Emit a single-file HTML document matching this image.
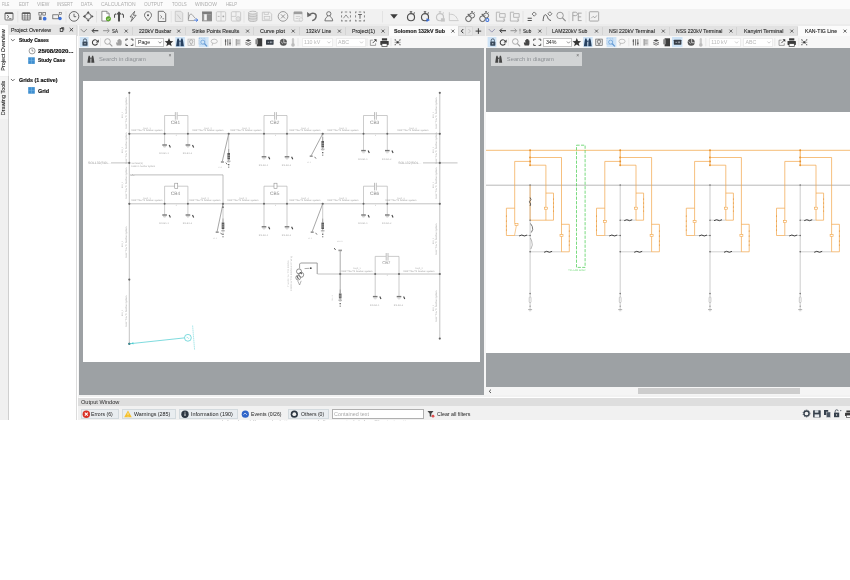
<!DOCTYPE html>
<html><head><meta charset="utf-8"><title>Power system app</title>
<style>
html,body{margin:0;padding:0;}
body{width:850px;height:580px;position:relative;overflow:hidden;background:#fff;font-family:"Liberation Sans",sans-serif;}
span{letter-spacing:0;}
svg{position:absolute;left:0;top:0;}
svg text{text-rendering:geometricPrecision;}
#root{position:absolute;left:0;top:0;width:850px;height:580px;overflow:hidden;filter:blur(0.45px);}
</style></head><body><div id="root">

<div style="position:absolute;left:0px;top:0px;width:850px;height:9px;background:#fbfbfb;"></div>
<div style="position:absolute;left:0px;top:9px;width:850px;height:16px;background:#f1f1f1;"></div>
<div style="position:absolute;left:0px;top:24px;width:850px;height:2.4px;background:#ececec;"></div>
<div style="position:absolute;left:0px;top:26.4px;width:850px;height:9.3px;background:#e2e2e2;"></div>
<div style="position:absolute;left:78px;top:35.7px;width:772px;height:12.1px;background:#f7f7f7;"></div>
<div style="position:absolute;left:0px;top:25px;width:8px;height:395.2px;background:#f0f0f0;"></div>
<div style="position:absolute;left:0px;top:76.5px;width:8px;height:42.5px;background:#f5f5f5;"></div>
<div style="position:absolute;left:7.8px;top:25px;width:1.2px;height:395.2px;background:#cfcfcf;"></div>
<div style="position:absolute;left:0px;top:24.5px;width:8.4px;height:51.8px;background:#ffffff;"></div>
<div style="position:absolute;left:7.9px;top:24.5px;width:0.6px;height:51.8px;background:#e6e6e6;"></div>
<div style="position:absolute;left:9px;top:25.2px;width:67.2px;height:9.6px;background:#e5e5e5;"></div>
<div style="position:absolute;left:9px;top:34.8px;width:67.2px;height:385.4px;background:#ffffff;"></div>
<div style="position:absolute;left:76.1px;top:25px;width:1.4px;height:395.2px;background:#dcdcdc;"></div>
<div style="position:absolute;left:77.5px;top:25px;width:1.5px;height:395.2px;background:#f6f6f6;"></div>
<div style="position:absolute;left:79px;top:47.8px;width:405px;height:348.2px;background:#9da1a4;"></div>
<div style="position:absolute;left:484.2px;top:47.8px;width:2px;height:349.2px;background:#f6f6f6;"></div>
<div style="position:absolute;left:486px;top:47.8px;width:364px;height:339.2px;background:#9da1a4;"></div>
<div style="position:absolute;left:83px;top:81px;width:397px;height:281px;background:#ffffff;"></div>
<div style="position:absolute;left:486px;top:112px;width:364px;height:241px;background:#ffffff;"></div>
<div style="position:absolute;left:486px;top:387px;width:364px;height:8.4px;background:#f5f5f5;"></div>
<div style="position:absolute;left:638px;top:387.6px;width:161.5px;height:6.8px;background:#cdcdcd;"></div>
<div style="position:absolute;left:78px;top:395px;width:772px;height:2px;background:#f2f2f2;"></div>
<div style="position:absolute;left:78px;top:397.5px;width:772px;height:8.8px;background:#dedede;"></div>
<div style="position:absolute;left:78px;top:406px;width:772px;height:14.2px;background:#f1f1f1;"></div>
<div style="position:absolute;left:484.8px;top:24px;width:1.1px;height:12px;background:#f2f2f2;"></div>
<span style="position:absolute;left:2.3px;top:0.68px;font-size:5.2px;line-height:6.24px;color:#adadad;font-weight:normal;white-space:nowrap;display:inline-block;transform-origin:0 50%;transform:scaleX(0.674);">FILE</span>
<span style="position:absolute;left:18.7px;top:0.68px;font-size:5.2px;line-height:6.24px;color:#adadad;font-weight:normal;white-space:nowrap;display:inline-block;transform-origin:0 50%;transform:scaleX(0.844);">EDIT</span>
<span style="position:absolute;left:36.7px;top:0.68px;font-size:5.2px;line-height:6.24px;color:#adadad;font-weight:normal;white-space:nowrap;display:inline-block;transform-origin:0 50%;transform:scaleX(0.941);">VIEW</span>
<span style="position:absolute;left:56.9px;top:0.68px;font-size:5.2px;line-height:6.24px;color:#adadad;font-weight:normal;white-space:nowrap;display:inline-block;transform-origin:0 50%;transform:scaleX(0.833);">INSERT</span>
<span style="position:absolute;left:81px;top:0.68px;font-size:5.2px;line-height:6.24px;color:#adadad;font-weight:normal;white-space:nowrap;display:inline-block;transform-origin:0 50%;transform:scaleX(0.878);">DATA</span>
<span style="position:absolute;left:101.2px;top:0.68px;font-size:5.2px;line-height:6.24px;color:#adadad;font-weight:normal;white-space:nowrap;display:inline-block;transform-origin:0 50%;transform:scaleX(0.963);">CALCULATION</span>
<span style="position:absolute;left:144.4px;top:0.68px;font-size:5.2px;line-height:6.24px;color:#adadad;font-weight:normal;white-space:nowrap;display:inline-block;transform-origin:0 50%;transform:scaleX(0.898);">OUTPUT</span>
<span style="position:absolute;left:172.3px;top:0.68px;font-size:5.2px;line-height:6.24px;color:#adadad;font-weight:normal;white-space:nowrap;display:inline-block;transform-origin:0 50%;transform:scaleX(0.844);">TOOLS</span>
<span style="position:absolute;left:195.2px;top:0.68px;font-size:5.2px;line-height:6.24px;color:#adadad;font-weight:normal;white-space:nowrap;display:inline-block;transform-origin:0 50%;transform:scaleX(0.960);">WINDOW</span>
<span style="position:absolute;left:226px;top:0.68px;font-size:5.2px;line-height:6.24px;color:#adadad;font-weight:normal;white-space:nowrap;display:inline-block;transform-origin:0 50%;transform:scaleX(0.824);">HELP</span>
<div style="position:absolute;left:132.3px;top:27px;width:0.8px;height:8px;background:#d4d4d4;"></div>
<span style="position:absolute;left:112.2px;top:27.67px;font-size:5.7px;line-height:6.84px;color:#2e2e2e;font-weight:normal;white-space:nowrap;-webkit-text-stroke:0.12px #2a2a2a;display:inline-block;transform-origin:0 50%;transform:scaleX(0.776);">SA</span>
<div style="position:absolute;left:185px;top:27px;width:0.8px;height:8px;background:#d4d4d4;"></div>
<span style="position:absolute;left:138.6px;top:27.67px;font-size:5.7px;line-height:6.84px;color:#2e2e2e;font-weight:normal;white-space:nowrap;-webkit-text-stroke:0.12px #2a2a2a;display:inline-block;transform-origin:0 50%;transform:scaleX(0.905);">220kV Busbar</span>
<div style="position:absolute;left:252.9px;top:27px;width:0.8px;height:8px;background:#d4d4d4;"></div>
<span style="position:absolute;left:191.6px;top:27.67px;font-size:5.7px;line-height:6.84px;color:#2e2e2e;font-weight:normal;white-space:nowrap;-webkit-text-stroke:0.12px #2a2a2a;display:inline-block;transform-origin:0 50%;transform:scaleX(0.901);">Strike Points Results</span>
<div style="position:absolute;left:298.6px;top:27px;width:0.8px;height:8px;background:#d4d4d4;"></div>
<span style="position:absolute;left:260px;top:27.67px;font-size:5.7px;line-height:6.84px;color:#2e2e2e;font-weight:normal;white-space:nowrap;-webkit-text-stroke:0.12px #2a2a2a;display:inline-block;transform-origin:0 50%;transform:scaleX(0.962);">Curve plot</span>
<div style="position:absolute;left:344.9px;top:27px;width:0.8px;height:8px;background:#d4d4d4;"></div>
<span style="position:absolute;left:305.6px;top:27.67px;font-size:5.7px;line-height:6.84px;color:#2e2e2e;font-weight:normal;white-space:nowrap;-webkit-text-stroke:0.12px #2a2a2a;display:inline-block;transform-origin:0 50%;transform:scaleX(0.887);">132kV Line</span>
<div style="position:absolute;left:388px;top:27px;width:0.8px;height:8px;background:#d4d4d4;"></div>
<span style="position:absolute;left:352px;top:27.67px;font-size:5.7px;line-height:6.84px;color:#2e2e2e;font-weight:normal;white-space:nowrap;-webkit-text-stroke:0.12px #2a2a2a;display:inline-block;transform-origin:0 50%;transform:scaleX(0.935);">Project(1)</span>
<div style="position:absolute;left:388.7px;top:25.6px;width:69.10000000000002px;height:10px;background:#fbfbfb;"></div>
<span style="position:absolute;left:394.4px;top:27.67px;font-size:5.7px;line-height:6.84px;color:#111;font-weight:bold;white-space:nowrap;-webkit-text-stroke:0.12px #2a2a2a;display:inline-block;transform-origin:0 50%;transform:scaleX(0.933);">Solomon 132kV Sub</span>
<div style="position:absolute;left:545.5px;top:27px;width:0.8px;height:8px;background:#d4d4d4;"></div>
<span style="position:absolute;left:522.5px;top:27.67px;font-size:5.7px;line-height:6.84px;color:#2e2e2e;font-weight:normal;white-space:nowrap;-webkit-text-stroke:0.12px #2a2a2a;display:inline-block;transform-origin:0 50%;transform:scaleX(0.818);">Sub</span>
<div style="position:absolute;left:601.5px;top:27px;width:0.8px;height:8px;background:#d4d4d4;"></div>
<span style="position:absolute;left:552.4px;top:27.67px;font-size:5.7px;line-height:6.84px;color:#2e2e2e;font-weight:normal;white-space:nowrap;-webkit-text-stroke:0.12px #2a2a2a;display:inline-block;transform-origin:0 50%;transform:scaleX(0.894);">LAM220kV Sub</span>
<div style="position:absolute;left:668.7px;top:27px;width:0.8px;height:8px;background:#d4d4d4;"></div>
<span style="position:absolute;left:608.9px;top:27.67px;font-size:5.7px;line-height:6.84px;color:#2e2e2e;font-weight:normal;white-space:nowrap;-webkit-text-stroke:0.12px #2a2a2a;display:inline-block;transform-origin:0 50%;transform:scaleX(0.913);">NSI 220kV Terminal</span>
<div style="position:absolute;left:736.2px;top:27px;width:0.8px;height:8px;background:#d4d4d4;"></div>
<span style="position:absolute;left:675.7px;top:27.67px;font-size:5.7px;line-height:6.84px;color:#2e2e2e;font-weight:normal;white-space:nowrap;-webkit-text-stroke:0.12px #2a2a2a;display:inline-block;transform-origin:0 50%;transform:scaleX(0.886);">NSS 220kV Terminal</span>
<div style="position:absolute;left:797px;top:27px;width:0.8px;height:8px;background:#d4d4d4;"></div>
<span style="position:absolute;left:743.6px;top:27.67px;font-size:5.7px;line-height:6.84px;color:#2e2e2e;font-weight:normal;white-space:nowrap;-webkit-text-stroke:0.12px #2a2a2a;display:inline-block;transform-origin:0 50%;transform:scaleX(0.933);">Kanyirri Terminal</span>
<div style="position:absolute;left:797.6px;top:25.6px;width:52.39999999999998px;height:10px;background:#fbfbfb;"></div>
<span style="position:absolute;left:804.7px;top:27.67px;font-size:5.7px;line-height:6.84px;color:#111;font-weight:normal;white-space:nowrap;-webkit-text-stroke:0.12px #2a2a2a;display:inline-block;transform-origin:0 50%;transform:scaleX(0.905);">KAN-TIG Line</span>
<span style="position:absolute;left:11px;top:26.60px;font-size:5.8px;line-height:6.96px;color:#2a2a2a;font-weight:normal;white-space:nowrap;-webkit-text-stroke:0.12px #2a2a2a;display:inline-block;transform-origin:0 50%;transform:scaleX(0.913);">Project Overview</span>
<span style="position:absolute;left:19.3px;top:37.43px;font-size:5.6px;line-height:6.72px;color:#111;font-weight:bold;white-space:nowrap;-webkit-text-stroke:0.18px #111;display:inline-block;transform-origin:0 50%;transform:scaleX(0.887);">Study Cases</span>
<span style="position:absolute;left:38.3px;top:47.83px;font-size:5.6px;line-height:6.72px;color:#111;font-weight:bold;white-space:nowrap;-webkit-text-stroke:0.18px #111;display:inline-block;transform-origin:0 50%;transform:scaleX(1.089);">25/08/2020...</span>
<span style="position:absolute;left:38.3px;top:57.43px;font-size:5.6px;line-height:6.72px;color:#111;font-weight:bold;white-space:nowrap;-webkit-text-stroke:0.18px #111;display:inline-block;transform-origin:0 50%;transform:scaleX(0.892);">Study Case</span>
<span style="position:absolute;left:19.3px;top:77.43px;font-size:5.6px;line-height:6.72px;color:#111;font-weight:bold;white-space:nowrap;-webkit-text-stroke:0.18px #111;display:inline-block;transform-origin:0 50%;transform:scaleX(0.952);">Grids (1 active)</span>
<span style="position:absolute;left:38.3px;top:87.63px;font-size:5.6px;line-height:6.72px;color:#111;font-weight:bold;white-space:nowrap;-webkit-text-stroke:0.18px #111;display:inline-block;transform-origin:0 50%;transform:scaleX(0.973);">Grid</span>
<span style="position:absolute;left:3.1px;top:50px;font-size:5.5px;line-height:6px;color:#333;-webkit-text-stroke:0.12px #333;white-space:nowrap;transform:translate(-50%,-50%) rotate(-90deg);">Project Overview</span>
<span style="position:absolute;left:3.1px;top:98px;font-size:5.5px;line-height:6px;color:#333;-webkit-text-stroke:0.12px #333;white-space:nowrap;transform:translate(-50%,-50%) rotate(-90deg);">Drawing Tools</span>
<div style="position:absolute;left:82.9px;top:52.2px;width:91.2px;height:13.9px;background:#d2d4d5;"></div>
<span style="position:absolute;left:98.9px;top:55.80px;font-size:5.8px;line-height:6.96px;color:#8c9094;font-weight:normal;white-space:nowrap;">Search in diagram</span>
<span style="position:absolute;left:168.4px;top:51.90px;font-size:5px;line-height:6.00px;color:#666;font-weight:normal;white-space:nowrap;">&#215;</span>
<div style="position:absolute;left:490.8px;top:52.2px;width:91.2px;height:13.9px;background:#d2d4d5;"></div>
<span style="position:absolute;left:506.8px;top:55.80px;font-size:5.8px;line-height:6.96px;color:#8c9094;font-weight:normal;white-space:nowrap;">Search in diagram</span>
<span style="position:absolute;left:576.3px;top:51.90px;font-size:5px;line-height:6.00px;color:#666;font-weight:normal;white-space:nowrap;">&#215;</span>
<div style="position:absolute;left:135.3px;top:37.8px;width:28.5px;height:8.9px;background:#ffffff;box-sizing:border-box;border:0.5px solid #c4c4c4;"></div>
<span style="position:absolute;left:137.9px;top:39.31px;font-size:5.3px;line-height:6.36px;color:#222;font-weight:normal;white-space:nowrap;">Page</span>
<div style="position:absolute;left:301.5px;top:37.8px;width:31.5px;height:8.9px;background:#ffffff;box-sizing:border-box;border:0.5px solid #ececec;"></div>
<span style="position:absolute;left:304.1px;top:39.31px;font-size:5.3px;line-height:6.36px;color:#b8b8b8;font-weight:normal;white-space:nowrap;">110 kV</span>
<div style="position:absolute;left:335.5px;top:37.8px;width:30px;height:8.9px;background:#ffffff;box-sizing:border-box;border:0.5px solid #ececec;"></div>
<span style="position:absolute;left:338.1px;top:39.31px;font-size:5.3px;line-height:6.36px;color:#b8b8b8;font-weight:normal;white-space:nowrap;">ABC</span>
<div style="position:absolute;left:543.3px;top:37.8px;width:29px;height:8.9px;background:#ffffff;box-sizing:border-box;border:0.5px solid #c4c4c4;"></div>
<span style="position:absolute;left:545.9px;top:39.31px;font-size:5.3px;line-height:6.36px;color:#222;font-weight:normal;white-space:nowrap;">34%</span>
<div style="position:absolute;left:708.6px;top:37.8px;width:32px;height:8.9px;background:#ffffff;box-sizing:border-box;border:0.5px solid #ececec;"></div>
<span style="position:absolute;left:711.2px;top:39.31px;font-size:5.3px;line-height:6.36px;color:#b8b8b8;font-weight:normal;white-space:nowrap;">110 kV</span>
<div style="position:absolute;left:742.8px;top:37.8px;width:30.4px;height:8.9px;background:#ffffff;box-sizing:border-box;border:0.5px solid #ececec;"></div>
<span style="position:absolute;left:745.4px;top:39.31px;font-size:5.3px;line-height:6.36px;color:#b8b8b8;font-weight:normal;white-space:nowrap;">ABC</span>
<span style="position:absolute;left:81.3px;top:398.79px;font-size:5.5px;line-height:6.60px;color:#2a2a2a;font-weight:normal;white-space:nowrap;display:inline-block;transform-origin:0 50%;transform:scaleX(1.019);">Output Window</span>
<div style="position:absolute;left:80.6px;top:408.8px;width:38px;height:10px;background:#e9edf0;box-sizing:border-box;border:0.5px solid #d3dade;"></div>
<span style="position:absolute;left:91.4px;top:410.95px;font-size:5.4px;line-height:6.48px;color:#222;font-weight:normal;white-space:nowrap;display:inline-block;transform-origin:0 50%;transform:scaleX(0.956);">Errors (6)</span>
<div style="position:absolute;left:122px;top:408.8px;width:54px;height:10px;background:#e9edf0;box-sizing:border-box;border:0.5px solid #d3dade;"></div>
<span style="position:absolute;left:134px;top:410.95px;font-size:5.4px;line-height:6.48px;color:#222;font-weight:normal;white-space:nowrap;display:inline-block;transform-origin:0 50%;transform:scaleX(0.989);">Warnings (285)</span>
<div style="position:absolute;left:179px;top:408.8px;width:59px;height:10px;background:#e9edf0;box-sizing:border-box;border:0.5px solid #d3dade;"></div>
<span style="position:absolute;left:191px;top:410.95px;font-size:5.4px;line-height:6.48px;color:#222;font-weight:normal;white-space:nowrap;display:inline-block;transform-origin:0 50%;transform:scaleX(1.021);">Information (190)</span>
<span style="position:absolute;left:251.3px;top:410.95px;font-size:5.4px;line-height:6.48px;color:#222;font-weight:normal;white-space:nowrap;display:inline-block;transform-origin:0 50%;transform:scaleX(0.950);">Events (0/26)</span>
<div style="position:absolute;left:288px;top:408.8px;width:40.5px;height:10px;background:#e9edf0;box-sizing:border-box;border:0.5px solid #d3dade;"></div>
<span style="position:absolute;left:300.5px;top:410.95px;font-size:5.4px;line-height:6.48px;color:#222;font-weight:normal;white-space:nowrap;display:inline-block;transform-origin:0 50%;transform:scaleX(0.955);">Others (0)</span>
<div style="position:absolute;left:331.7px;top:409px;width:92.2px;height:9.6px;background:#ffffff;box-sizing:border-box;border:0.6px solid #b0b0b0;"></div>
<span style="position:absolute;left:334px;top:410.98px;font-size:5.2px;line-height:6.24px;color:#a8a8a8;font-weight:normal;white-space:nowrap;display:inline-block;transform-origin:0 50%;transform:scaleX(1.044);">Contained text</span>
<span style="position:absolute;left:437px;top:410.85px;font-size:5.4px;line-height:6.48px;color:#222;font-weight:normal;white-space:nowrap;display:inline-block;transform-origin:0 50%;transform:scaleX(0.979);">Clear all filters</span>
<div style="position:absolute;left:222px;top:419.6px;width:205px;height:1.6px;overflow:hidden;opacity:0.35;"><span style="position:absolute;left:0;top:-0.6px;font-size:5.4px;line-height:6px;color:#333;white-space:nowrap;letter-spacing:0.3px;">Info - Load flow calculation successfully executed. Info - Short circuit</span></div>
<svg width="850" height="580" viewBox="0 0 850 580" font-family="Liberation Sans, sans-serif">
<g transform="translate(9,16.4) scale(0.93)"><g transform="scale(0.86)"><rect x="-5" y="-4.5" width="10" height="9" rx="1" fill="none" stroke="#505050" stroke-width="1"/><path d="M-5,-3.9 H5" stroke="#505050" stroke-width="1.6"/><path d="M-2.5,-1.6 L0,0.4 L-2.5,2.4 M0.3,2.8 H3" fill="none" stroke="#505050" stroke-width="1"/></g></g>
<g transform="translate(26.2,16.4) scale(0.93)"><g transform="scale(0.86)"><rect x="-5" y="-4.5" width="10" height="9" rx="0.8" fill="none" stroke="#505050" stroke-width="1"/><path d="M-5,-3.9 H5" stroke="#505050" stroke-width="1.5"/><path d="M-5,-0.6 H5 M-5,2 H5 M-1.7,-4.5 V4.5 M1.7,-4.5 V4.5" stroke="#505050" stroke-width="0.7" fill="none"/></g></g>
<g transform="translate(42.5,16.4) scale(0.93)"><g transform="scale(0.86)"><rect x="-4.5" y="-5" width="3.4" height="3.4" fill="none" stroke="#505050" stroke-width="0.8"/><rect x="0.4" y="-5" width="3.4" height="3.4" fill="none" stroke="#505050" stroke-width="0.8"/><rect x="-4.5" y="0" width="3.4" height="4.5" fill="#505050" opacity="0.75"/><circle cx="2.7" cy="2.8" r="2.3" fill="#3b6fd8"/></g></g>
<g transform="translate(57.2,16.4) scale(0.93)"><g transform="scale(0.86)"><rect x="-5.5" y="-2" width="7" height="5" fill="none" stroke="#505050" stroke-width="0.9"/><rect x="2.5" y="-5" width="2.6" height="2.6" fill="none" stroke="#505050" stroke-width="0.7"/><circle cx="3.5" cy="2.6" r="2.2" fill="#3b6fd8"/></g></g>
<g transform="translate(74,16.4) scale(0.93)"><circle r="5.2" fill="none" stroke="#505050" stroke-width="0.9"/><path d="M0,-2.8600000000000003 V0.3 H2.3400000000000003" fill="none" stroke="#505050" stroke-width="0.9"/></g>
<g transform="translate(88.2,16.4) scale(0.93)"><circle r="3.1" fill="none" stroke="#505050" stroke-width="0.9"/><path d="M0,-5.8 L-1.7,-3.5 H1.7 Z M0,5.8 L-1.7,3.5 H1.7 Z M-5.8,0 L-3.5,-1.7 V1.7 Z M5.8,0 L3.5,-1.7 V1.7 Z" fill="#505050"/></g>
<g transform="translate(105.6,16.4) scale(0.93)"><path d="M-4,-5.5 H1.3 L3.8,-3 V5 H-4 Z" fill="#fcfcfc" stroke="#6a6a6a" stroke-width="0.8"/><path d="M1.3,-5.5 V-3 H3.8" fill="none" stroke="#6a6a6a" stroke-width="0.6"/><circle cx="3" cy="2.6" r="2.7" fill="#5aa52c"/><path d="M1.8,2.7 L2.7,3.6 L4.3,1.6" fill="none" stroke="#eaf6df" stroke-width="0.8"/></g>
<g transform="translate(119,16.4) scale(0.93)"><path d="M0,-5.5 L3,-2 H1.1 V5.5 H-1.1 V-2 H-3 Z" fill="#505050"/><path d="M-4.8,1.5 V-1.5 L-3.2,-3 M4.8,1.5 V-1.5 L3.2,-3" stroke="#505050" stroke-width="1.1" fill="none"/></g>
<g transform="translate(133,16.4) scale(0.93)"><path d="M1.8,-5.5 L-3.2,0.6 H-0.3 L-2.2,5.5 L3.4,-1.2 H0.5 Z" fill="none" stroke="#505050" stroke-width="0.8"/></g>
<g transform="translate(148,16.4) scale(0.93)"><g transform="scale(0.9)"><path d="M0,5.5 L-2.6,1.8 A4.2,4.2 0 1 1 2.6,1.8 Z" fill="none" stroke="#505050" stroke-width="0.9"/><circle cy="-1.5" r="1.2" fill="#505050"/></g></g>
<g transform="translate(162,16.4) scale(0.93)"><path d="M-4,-5.5 H1.5 L4,-3 V5.5 H-4 Z" fill="none" stroke="#5a5a5a" stroke-width="0.9"/><path d="M-1.8,-1 L0,0.5 L-1.8,2 M0.5,2.5 H2.3" fill="none" stroke="#5a5a5a" stroke-width="0.7"/></g>
<g transform="translate(179,16.4) scale(0.93)"><path d="M-4,-5.5 H2 L4,-3.5 V5.5 H-4 Z" fill="#e6e6e6" stroke="#c4c4c4" stroke-width="0.9"/><path d="M-2,-2 L2,3" stroke="#c4c4c4" stroke-width="1"/></g>
<g transform="translate(193,16.4) scale(0.93)"><path d="M-5,-4.5 V4.5 H1" fill="none" stroke="#8a8a8a" stroke-width="0.8"/><path d="M-5,3 C-3,-6 -1,-2 1,0.5 L3,2.5" fill="none" stroke="#8a8a8a" stroke-width="0.8"/><path d="M1,4 H5 M3.4,2.4 L5.2,4 L3.4,5.6" stroke="#3b6fd8" stroke-width="1" fill="none"/></g>
<g transform="translate(207,16.4) scale(0.93)"><rect x="-4.8" y="-4.8" width="9.6" height="9.6" fill="#f4f4f4" stroke="#7d7d7d" stroke-width="0.9"/><rect x="-4.8" y="-4.8" width="9.6" height="2.4" fill="#7d7d7d"/><rect x="-0.2" y="-2.4" width="5" height="7.2" fill="#8a8a8a"/><rect x="-4.8" y="-2.4" width="1.8" height="7.2" fill="#9a9a9a"/></g>
<g transform="translate(221,16.4) scale(0.93)"><rect x="-5" y="-5" width="10" height="10" rx="1" fill="none" stroke="#c4c4c4" stroke-width="0.9"/><path d="M0,-5 V5" stroke="#c4c4c4" stroke-width="0.8"/><path d="M-3.5,0 H-1.5 M1.5,0 H3.5 M2.5,-1 V1" stroke="#8a8a8a" stroke-width="0.6"/></g>
<g transform="translate(236,16.4) scale(0.93)"><rect x="-5" y="-5" width="10" height="10" rx="1" fill="none" stroke="#c4c4c4" stroke-width="0.9"/><path d="M0,-5 V0 H-5" stroke="#c4c4c4" stroke-width="0.8" fill="none"/><circle cx="2.3" cy="2.5" r="2.3" fill="#e0e0e0" stroke="#c4c4c4" stroke-width="0.8"/></g>
<g transform="translate(252.8,16.4) scale(0.93)"><path d="M-4.5,-4 V4 C-4.5,6 4.5,6 4.5,4 V-4" fill="#dcdcdc" stroke="#b4b4b4" stroke-width="0.9"/><ellipse cy="-4" rx="4.5" ry="1.6" fill="#eee" stroke="#b4b4b4" stroke-width="0.9"/><path d="M-4.5,-1.2 C-4.5,0.6 4.5,0.6 4.5,-1.2 M-4.5,1.5 C-4.5,3.3 4.5,3.3 4.5,1.5" fill="none" stroke="#b4b4b4" stroke-width="0.8"/></g>
<g transform="translate(267,16.4) scale(0.93)"><path d="M-5,-4.5 H3 L5,-2.5 V4.5 H-5 Z" fill="none" stroke="#c4c4c4" stroke-width="0.9"/><rect x="-3" y="0" width="6" height="3" fill="none" stroke="#c4c4c4" stroke-width="0.8"/><path d="M-3,-4.5 V-2 H1.5 V-4.5" fill="none" stroke="#c4c4c4" stroke-width="0.8"/></g>
<g transform="translate(283,16.4) scale(0.93)"><circle r="5.2" fill="none" stroke="#8a8a8a" stroke-width="0.9"/><path d="M-2.2,-2.2 L2.2,2.2 M2.2,-2.2 L-2.2,2.2" stroke="#8a8a8a" stroke-width="0.9"/></g>
<g transform="translate(298,16.4) scale(0.93)"><rect x="-4.5" y="-5" width="9" height="10" rx="0.8" fill="none" stroke="#c4c4c4" stroke-width="0.9"/><rect x="-4.5" y="-5" width="9" height="2.6" fill="#8a8a8a" opacity="0.8"/><path d="M-2.5,0 H2.5 M-2.5,2.2 H0.5" stroke="#c4c4c4" stroke-width="0.8"/><circle cx="3.2" cy="3.3" r="1.9" fill="#eee" stroke="#c4c4c4" stroke-width="0.7"/></g>
<g transform="translate(312,16.4) scale(0.93)"><path d="M-2.6,-1.6 C0,-4.6 5.2,-3.6 4.4,0.6 C4,2.8 2.2,4.2 0.2,4.6" fill="none" stroke="#666" stroke-width="1.5"/><path d="M-5.4,-4.6 L-5,0.9 L-0.4,-1.4 Z" fill="#666"/></g>
<g transform="translate(328.8,16.4) scale(0.93)"><circle cy="-2.8" r="2.3" fill="none" stroke="#5e5e5e" stroke-width="0.9"/><path d="M-1.3,-0.9 C-1.3,1.2 -4.2,1.2 -4.2,4.8 H4.2 C4.2,1.2 1.3,1.2 1.3,-0.9" fill="none" stroke="#5e5e5e" stroke-width="0.9"/></g>
<g transform="translate(346,16.4) scale(0.93)"><rect x="-4.8" y="-4.8" width="9.6" height="9.6" fill="none" stroke="#8c8c8c" stroke-width="1.1" stroke-dasharray="2.6 2.2" stroke-dashoffset="1.3"/><path d="M-2.8,2 L0,-1.6 L2.8,2" fill="none" stroke="#8c8c8c" stroke-width="1"/></g>
<g transform="translate(360,16.4) scale(0.93)"><rect x="-4.8" y="-4.8" width="9.6" height="9.6" fill="none" stroke="#8c8c8c" stroke-width="1.1" stroke-dasharray="2.6 2.2" stroke-dashoffset="1.3"/><path d="M-2,-2 H2 M0,-2 V2.4" fill="none" stroke="#666" stroke-width="1.1"/></g>
<g transform="translate(394,16.4) scale(0.93)"><path d="M-4,-2.2 H4 L0,2.6 Z" fill="#3c3c3c"/></g>
<g transform="translate(411,16.4) scale(0.93)"><circle cy="0.9" r="3.8" fill="none" stroke="#505050" stroke-width="1.25"/><path d="M-1.3,-5 H1.3 M0,-5 V-3.2 M2.9,-3.1 L4,-4.2" stroke="#505050" stroke-width="1.1"/></g>
<g transform="translate(425,16.4) scale(0.93)"><circle cy="0.9" r="3.8" fill="none" stroke="#505050" stroke-width="1.25"/><path d="M-1.3,-5 H1.3 M0,-5 V-3.2 M2.9,-3.1 L4,-4.2" stroke="#505050" stroke-width="1.1"/><path d="M1.6,2 L5.4,4 L1.6,6 Z" fill="#3b6fd8"/></g>
<g transform="translate(440,16.4) scale(0.93)"><circle cy="0.9" r="3.8" fill="none" stroke="#c4c4c4" stroke-width="1.25"/><path d="M-1.3,-5 H1.3 M0,-5 V-3.2 M2.9,-3.1 L4,-4.2" stroke="#c4c4c4" stroke-width="1.1"/><rect x="1" y="2" width="4.2" height="3.6" fill="#c4c4c4"/></g>
<g transform="translate(454,16.4) scale(0.93)"><path d="M-5,-4.5 V4.5 H5" fill="none" stroke="#c4c4c4" stroke-width="0.9"/><path d="M-5,-2 C-1,-3 2,-1 4,3.5" fill="none" stroke="#c4c4c4" stroke-width="0.9"/></g>
<g transform="translate(470,16.4) scale(0.93)"><g transform="translate(2.2,-1.6) scale(0.72)"><circle cy="0.9" r="3.8" fill="none" stroke="#505050" stroke-width="1.25"/><path d="M-1.3,-5 H1.3 M0,-5 V-3.2 M2.9,-3.1 L4,-4.2" stroke="#505050" stroke-width="1.1"/></g><g transform="translate(-1.6,1.8) scale(0.8)"><circle cy="0.9" r="3.8" fill="#f1f1f1" stroke="#505050" stroke-width="1.25"/><path d="M-1.3,-5 H1.3 M0,-5 V-3.2 M2.9,-3.1 L4,-4.2" stroke="#505050" stroke-width="1.1"/></g></g>
<g transform="translate(484,16.4) scale(0.93)"><g transform="translate(2.2,-1.6) scale(0.72)"><circle cy="0.9" r="3.8" fill="none" stroke="#505050" stroke-width="1.25"/><path d="M-1.3,-5 H1.3 M0,-5 V-3.2 M2.9,-3.1 L4,-4.2" stroke="#505050" stroke-width="1.1"/></g><g transform="translate(-1.6,1.8) scale(0.8)"><circle cy="0.9" r="3.8" fill="#f1f1f1" stroke="#505050" stroke-width="1.25"/><path d="M-1.3,-5 H1.3 M0,-5 V-3.2 M2.9,-3.1 L4,-4.2" stroke="#505050" stroke-width="1.1"/></g><circle cx="3.6" cy="3.8" r="1.6" fill="#e8eefc" stroke="#3b6fd8" stroke-width="1.1"/></g>
<g transform="translate(501,16.4) scale(0.93)"><path d="M-1,-4.5 H-5 V5 H3.5 V2" fill="none" stroke="#b6b6b6" stroke-width="1.05"/><path d="M-1.5,1 V-3 H4.5 V1 Z" fill="none" stroke="#b6b6b6" stroke-width="1.05"/><path d="M2,2.4 L4.4,4.2 L2,6" fill="none" stroke="#b6b6b6" stroke-width="0.8"/></g>
<g transform="translate(515,16.4) scale(0.93)"><path d="M-1,-4.5 H-5 V5 H3.5 V2" fill="none" stroke="#b6b6b6" stroke-width="1.05"/><path d="M-1.5,1 V-3 H4.5 V1 Z" fill="none" stroke="#b6b6b6" stroke-width="1.05"/><path d="M2,2.4 L4.4,4.2 L2,6" fill="none" stroke="#b6b6b6" stroke-width="0.8"/></g>
<g transform="translate(531.8,16.4) scale(0.93)"><path d="M-4.5,2 H0 M-4.5,4.3 H0" stroke="#505050" stroke-width="1.1"/><path d="M2.6,-4.8 L4.9,-2.5 L2.6,-0.2 L0.3,-2.5 Z" fill="none" stroke="#505050" stroke-width="0.8"/></g>
<g transform="translate(547.3,16.4) scale(0.93)"><path d="M-4.5,5 C-4,-4 -1,-3 0.5,1.5 C1.2,3.4 2.5,4.2 4,4.4" fill="none" stroke="#505050" stroke-width="1"/><path d="M2.8,-5 L5,-2.8 L2.8,-0.6 L0.6,-2.8 Z" fill="none" stroke="#505050" stroke-width="0.8"/></g>
<g transform="translate(561,16.4) scale(0.93)"><circle cx="-1" cy="-1" r="3.5" fill="none" stroke="#8a8a8a" stroke-width="0.9"/><path d="M1.6,1.6 L5,5" stroke="#8a8a8a" stroke-width="1.26"/></g>
<g transform="translate(577,16.4) scale(0.93)"><path d="M-4.5,5 V-4.5 H-1.5 C1,-4.5 1,-0.8 -1.5,-0.8 H-4.5 M1,-3.5 H5 M1,0.5 H4.5 M1,4.5 H5 M1.4,-3.5 V4.5" fill="none" stroke="#a6a6a6" stroke-width="1.05"/></g>
<g transform="translate(594,16.4) scale(0.93)"><rect x="-5" y="-5" width="10" height="10" rx="0.6" fill="none" stroke="#a6a6a6" stroke-width="1.05"/><path d="M-3,2 L-1,0 L1,1.5 L3,-1" fill="none" stroke="#8a8a8a" stroke-width="0.7"/></g>
<path d="M17.8,11 V22.5" stroke="#dcdcdc" stroke-width="0.7"/>
<path d="M66,11 V22.5" stroke="#dcdcdc" stroke-width="0.7"/>
<path d="M96.5,11 V22.5" stroke="#dcdcdc" stroke-width="0.7"/>
<path d="M171.2,11 V22.5" stroke="#dcdcdc" stroke-width="0.7"/>
<path d="M244,11 V22.5" stroke="#dcdcdc" stroke-width="0.7"/>
<path d="M382.5,11 V22.5" stroke="#dcdcdc" stroke-width="0.7"/>
<path d="M523,11 V22.5" stroke="#dcdcdc" stroke-width="0.7"/>
<path d="M569,11 V22.5" stroke="#dcdcdc" stroke-width="0.7"/>
<path d="M586,11 V22.5" stroke="#dcdcdc" stroke-width="0.7"/>
<rect x="79.8" y="37" width="8.8" height="10.2" fill="#cfe4f7"/>
<rect x="175.3" y="37" width="9.6" height="10.2" fill="#cfe4f7"/>
<rect x="198.8" y="37" width="9.8" height="10.2" fill="#cfe4f7"/>
<g transform="translate(85.0,42.3) scale(1)"><g transform="scale(0.85)"><rect x="-3" y="-0.8" width="6" height="4.8" rx="0.5" fill="#3a4a5c"/><path d="M-1.9,-0.8 V-2.2 A1.9,1.9 0 0 1 1.9,-2.2 V-0.8" fill="none" stroke="#3a4a5c" stroke-width="1"/><rect x="-0.5" y="0.8" width="1" height="1.6" fill="#dfe8f0"/></g></g>
<g transform="translate(95.0,42.3) scale(1)"><g transform="scale(0.76)"><path d="M3.3,-1.2 A3.5,3.5 0 1 0 3.3,1.6" fill="none" stroke="#3c3c3c" stroke-width="1.35"/><path d="M5,-3.8 V0.2 H1 Z" fill="#3c3c3c"/></g></g>
<g transform="translate(108.3,42.3) scale(1)"><g transform="scale(0.8)"><circle cx="-1" cy="-1" r="3.5" fill="none" stroke="#999" stroke-width="1"/><path d="M1.6,1.6 L5,5" stroke="#999" stroke-width="1.4"/></g></g>
<g transform="translate(119,42.3) scale(1)"><g transform="scale(0.85)"><path d="M-2.6,3.8 L-3.6,0.4 L-2.4,0 L-1.8,1 V-2.6 H-0.9 V-3.6 H0.2 V-3.8 H1.2 V-3.2 H2.2 V-2 H3.1 V2 L2.4,3.8 Z" fill="#a0a0a0"/></g></g>
<g transform="translate(129.4,42.3) scale(1)"><g transform="scale(0.88)"><path d="M-4,-1.6 V-3.6 H-1.6 M1.6,-3.6 H4 V-1.6 M4,1.6 V3.6 H1.6 M-1.6,3.6 H-4 V1.6" fill="none" stroke="#505050" stroke-width="1.1"/></g></g>
<g transform="translate(169,42.3) scale(1)"><path d="M0,-4.2 L1.25,-1.3 L4.3,-1.1 L1.9,0.9 L2.7,4 L0,2.3 L-2.7,4 L-1.9,0.9 L-4.3,-1.1 L-1.25,-1.3 Z" fill="#333"/></g>
<g transform="translate(180,42.3) scale(1)"><path d="M-3.9,4 L-3.1,-1.6 L-2.5,-3.8 H-1.3 L-0.7,-1.6 L-0.45,4 Z M3.9,4 L3.1,-1.6 L2.5,-3.8 H1.3 L0.7,-1.6 L0.45,4 Z" fill="#27405f"/><rect x="-0.7" y="-1.7" width="1.4" height="1.5" fill="#27405f" opacity="0.85"/></g>
<g transform="translate(191.2,42.3) scale(1)"><g transform="scale(0.85)"><rect x="-3.8" y="-3.8" width="7.6" height="7.6" fill="#ececec" stroke="#b0b0b0" stroke-width="0.7"/><path d="M0,2.8 L-1.6,0 A1.9,1.9 0 1 1 1.6,0 Z" fill="none" stroke="#888" stroke-width="0.7"/></g></g>
<g transform="translate(203,42.3) scale(1)"><rect x="-4" y="-4" width="6" height="6" fill="none" stroke="#8db6e2" stroke-width="0.7" stroke-dasharray="1 0.8"/><circle cx="-0.2" cy="-0.2" r="2" fill="none" stroke="#6a9fd8" stroke-width="0.8"/><path d="M1.4,1.4 L4,4" stroke="#5a92d0" stroke-width="1.2"/></g>
<g transform="translate(214.2,42.3) scale(1)"><g transform="scale(0.82)"><ellipse cx="0" cy="-1.2" rx="3.8" ry="2.6" fill="none" stroke="#a8a8a8" stroke-width="0.8"/><path d="M-1.8,1 L-2.6,4" stroke="#a8a8a8" stroke-width="0.8"/></g></g>
<g transform="translate(227.8,42.3) scale(1)"><g transform="scale(0.8)"><path d="M-2.8,-4 V4 M0,-4 V4 M2.8,-4 V4" stroke="#505050" stroke-width="1"/><rect x="-3.6" y="-2.4" width="1.6" height="1.6" fill="#505050"/><rect x="2" y="0.4" width="1.6" height="1.6" fill="#505050"/></g></g>
<g transform="translate(238.2,42.3) scale(1)"><g transform="scale(0.82)"><rect x="-3" y="-4" width="6" height="8" fill="#d8d8d8"/><path d="M-2,-2.4 H2 M-2,-0.4 H2 M-2,1.6 H2" stroke="#999" stroke-width="0.7"/><rect x="-3" y="-4" width="1.6" height="8" fill="#a5a5a5"/></g></g>
<g transform="translate(248.3,42.3) scale(1)"><g transform="scale(0.72)"><path d="M0,-4.2 L4,-2.4 L0,-0.6 L-4,-2.4 Z" fill="#505050"/><path d="M-4,0 L0,1.8 L4,0 M-4,2.2 L0,4 L4,2.2" fill="none" stroke="#505050" stroke-width="1"/></g></g>
<g transform="translate(259,42.3) scale(1)"><rect x="-2.2" y="-4" width="5.4" height="8" fill="#3d3d3d"/><rect x="-3.6" y="-3" width="2.6" height="5" fill="#8a8a8a"/></g>
<g transform="translate(269.8,42.3) scale(1)"><g transform="scale(0.9)"><rect x="-4.2" y="-2.8" width="8.4" height="5.6" rx="0.5" fill="#353c45"/><path d="M-2.4,0 H-0.6 M0.8,-1 V1 M2.2,-1 V1" stroke="#d8e0ea" stroke-width="0.7"/></g></g>
<g transform="translate(283.4,42.3) scale(1)"><g transform="scale(0.88)"><circle r="4" fill="#555"/><path d="M0.5,-4 V0.5 H4" stroke="#f6f6f6" stroke-width="0.8" fill="none"/><path d="M-2.8,-1 L-0.8,1.6" stroke="#f6f6f6" stroke-width="0.7"/></g></g>
<g transform="translate(293,42.3) scale(1)"><rect x="-1.1" y="-4.2" width="2.2" height="6" rx="1.1" fill="#c9c9c9"/><circle cy="2.6" r="1.8" fill="#bcbcbc"/></g>
<g transform="translate(373.3,42.3) scale(1)"><g transform="scale(0.82)"><path d="M-0.5,-2.6 H-3.6 V3.8 H2.8 V1.2" fill="none" stroke="#777" stroke-width="0.8"/><path d="M-0.8,1 L2.8,-2.6" stroke="#333" stroke-width="1"/><path d="M0.6,-3.8 H4 V-0.4 Z" fill="#333"/></g></g>
<g transform="translate(384.5,42.3) scale(1)"><rect x="-4.2" y="-1.4" width="8.4" height="4" rx="0.6" fill="#3a3a3a"/><rect x="-2.6" y="-4" width="5.2" height="2.2" fill="#3a3a3a"/><rect x="-2.6" y="1.4" width="5.2" height="2.8" fill="#fff" stroke="#3a3a3a" stroke-width="0.7"/></g>
<g transform="translate(397.6,42.3) scale(1)"><g transform="scale(0.72)"><path d="M-3.4,-3.4 L3.4,3.4 M3.4,-3.4 L-3.4,3.4 M-4.2,0 H4.2" stroke="#505050" stroke-width="0.7"/><circle r="1.5" fill="#333"/><circle cx="-3.4" cy="-3.4" r="0.8" fill="#333"/><circle cx="3.4" cy="-3.4" r="0.8" fill="#333"/><circle cx="3.4" cy="3.4" r="0.8" fill="#333"/><circle cx="-3.4" cy="3.4" r="0.8" fill="#333"/></g></g>
<path d="M100.5,38 V46.2" stroke="#dedede" stroke-width="0.6"/>
<path d="M221,38 V46.2" stroke="#dedede" stroke-width="0.6"/>
<path d="M232.5,38 V46.2" stroke="#dedede" stroke-width="0.6"/>
<path d="M298,38 V46.2" stroke="#dedede" stroke-width="0.6"/>
<path d="M367,38 V46.2" stroke="#dedede" stroke-width="0.6"/>
<path d="M391,38 V46.2" stroke="#dedede" stroke-width="0.6"/>
<rect x="487.6" y="37" width="8.8" height="10.2" fill="#cfe4f7"/>
<rect x="583.1" y="37" width="9.6" height="10.2" fill="#cfe4f7"/>
<rect x="606.6" y="37" width="9.8" height="10.2" fill="#cfe4f7"/>
<rect x="672.0" y="37" width="10.5" height="10.2" fill="#cfe4f7"/>
<g transform="translate(492.8,42.3) scale(1)"><g transform="scale(0.85)"><rect x="-3" y="-0.8" width="6" height="4.8" rx="0.5" fill="#3a4a5c"/><path d="M-1.9,-0.8 V-2.2 A1.9,1.9 0 0 1 1.9,-2.2 V-0.8" fill="none" stroke="#3a4a5c" stroke-width="1"/><rect x="-0.5" y="0.8" width="1" height="1.6" fill="#dfe8f0"/></g></g>
<g transform="translate(502.8,42.3) scale(1)"><g transform="scale(0.76)"><path d="M3.3,-1.2 A3.5,3.5 0 1 0 3.3,1.6" fill="none" stroke="#3c3c3c" stroke-width="1.35"/><path d="M5,-3.8 V0.2 H1 Z" fill="#3c3c3c"/></g></g>
<g transform="translate(516.1,42.3) scale(1)"><g transform="scale(0.8)"><circle cx="-1" cy="-1" r="3.5" fill="none" stroke="#999" stroke-width="1"/><path d="M1.6,1.6 L5,5" stroke="#999" stroke-width="1.4"/></g></g>
<g transform="translate(526.8,42.3) scale(1)"><g transform="scale(0.85)"><path d="M-2.6,3.8 L-3.6,0.4 L-2.4,0 L-1.8,1 V-2.6 H-0.9 V-3.6 H0.2 V-3.8 H1.2 V-3.2 H2.2 V-2 H3.1 V2 L2.4,3.8 Z" fill="#454545"/></g></g>
<g transform="translate(537.2,42.3) scale(1)"><g transform="scale(0.88)"><path d="M-4,-1.6 V-3.6 H-1.6 M1.6,-3.6 H4 V-1.6 M4,1.6 V3.6 H1.6 M-1.6,3.6 H-4 V1.6" fill="none" stroke="#505050" stroke-width="1.1"/></g></g>
<g transform="translate(576.8,42.3) scale(1)"><path d="M0,-4.2 L1.25,-1.3 L4.3,-1.1 L1.9,0.9 L2.7,4 L0,2.3 L-2.7,4 L-1.9,0.9 L-4.3,-1.1 L-1.25,-1.3 Z" fill="#333"/></g>
<g transform="translate(587.8,42.3) scale(1)"><path d="M-3.9,4 L-3.1,-1.6 L-2.5,-3.8 H-1.3 L-0.7,-1.6 L-0.45,4 Z M3.9,4 L3.1,-1.6 L2.5,-3.8 H1.3 L0.7,-1.6 L0.45,4 Z" fill="#27405f"/><rect x="-0.7" y="-1.7" width="1.4" height="1.5" fill="#27405f" opacity="0.85"/></g>
<g transform="translate(599.0,42.3) scale(1)"><g transform="scale(0.85)"><rect x="-3.8" y="-3.8" width="7.6" height="7.6" fill="#e4e4e4" stroke="#555" stroke-width="0.7"/><path d="M0,2.8 L-1.6,0 A1.9,1.9 0 1 1 1.6,0 Z" fill="none" stroke="#333" stroke-width="0.7"/></g></g>
<g transform="translate(610.8,42.3) scale(1)"><rect x="-4" y="-4" width="6" height="6" fill="none" stroke="#8db6e2" stroke-width="0.7" stroke-dasharray="1 0.8"/><circle cx="-0.2" cy="-0.2" r="2" fill="none" stroke="#6a9fd8" stroke-width="0.8"/><path d="M1.4,1.4 L4,4" stroke="#5a92d0" stroke-width="1.2"/></g>
<g transform="translate(622.0,42.3) scale(1)"><g transform="scale(0.82)"><ellipse cx="0" cy="-1.2" rx="3.8" ry="2.6" fill="none" stroke="#a8a8a8" stroke-width="0.8"/><path d="M-1.8,1 L-2.6,4" stroke="#a8a8a8" stroke-width="0.8"/></g></g>
<g transform="translate(635.6,42.3) scale(1)"><g transform="scale(0.8)"><path d="M-2.8,-4 V4 M0,-4 V4 M2.8,-4 V4" stroke="#505050" stroke-width="1"/><rect x="-3.6" y="-2.4" width="1.6" height="1.6" fill="#505050"/><rect x="2" y="0.4" width="1.6" height="1.6" fill="#505050"/></g></g>
<g transform="translate(646.0,42.3) scale(1)"><g transform="scale(0.82)"><rect x="-3" y="-4" width="6" height="8" fill="#d8d8d8"/><path d="M-2,-2.4 H2 M-2,-0.4 H2 M-2,1.6 H2" stroke="#999" stroke-width="0.7"/><rect x="-3" y="-4" width="1.6" height="8" fill="#a5a5a5"/></g></g>
<g transform="translate(656.1,42.3) scale(1)"><g transform="scale(0.72)"><path d="M0,-4.2 L4,-2.4 L0,-0.6 L-4,-2.4 Z" fill="#505050"/><path d="M-4,0 L0,1.8 L4,0 M-4,2.2 L0,4 L4,2.2" fill="none" stroke="#505050" stroke-width="1"/></g></g>
<g transform="translate(666.8,42.3) scale(1)"><rect x="-2.2" y="-4" width="5.4" height="8" fill="#3d3d3d"/><rect x="-3.6" y="-3" width="2.6" height="5" fill="#8a8a8a"/></g>
<g transform="translate(677.6,42.3) scale(1)"><g transform="scale(0.9)"><rect x="-4.2" y="-2.8" width="8.4" height="5.6" rx="0.5" fill="#353c45"/><path d="M-2.4,0 H-0.6 M0.8,-1 V1 M2.2,-1 V1" stroke="#d8e0ea" stroke-width="0.7"/></g></g>
<g transform="translate(691.2,42.3) scale(1)"><g transform="scale(0.88)"><circle r="4" fill="#555"/><path d="M0.5,-4 V0.5 H4" stroke="#f6f6f6" stroke-width="0.8" fill="none"/><path d="M-2.8,-1 L-0.8,1.6" stroke="#f6f6f6" stroke-width="0.7"/></g></g>
<g transform="translate(700.8,42.3) scale(1)"><rect x="-1.1" y="-4.2" width="2.2" height="6" rx="1.1" fill="#c9c9c9"/><circle cy="2.6" r="1.8" fill="#bcbcbc"/></g>
<g transform="translate(782.0,42.3) scale(1)"><g transform="scale(0.82)"><path d="M-0.5,-2.6 H-3.6 V3.8 H2.8 V1.2" fill="none" stroke="#777" stroke-width="0.8"/><path d="M-0.8,1 L2.8,-2.6" stroke="#333" stroke-width="1"/><path d="M0.6,-3.8 H4 V-0.4 Z" fill="#333"/></g></g>
<g transform="translate(791.6999999999999,42.3) scale(1)"><rect x="-4.2" y="-1.4" width="8.4" height="4" rx="0.6" fill="#3a3a3a"/><rect x="-2.6" y="-4" width="5.2" height="2.2" fill="#3a3a3a"/><rect x="-2.6" y="1.4" width="5.2" height="2.8" fill="#fff" stroke="#3a3a3a" stroke-width="0.7"/></g>
<g transform="translate(804.3000000000001,42.3) scale(1)"><g transform="scale(0.72)"><path d="M-3.4,-3.4 L3.4,3.4 M3.4,-3.4 L-3.4,3.4 M-4.2,0 H4.2" stroke="#505050" stroke-width="0.7"/><circle r="1.5" fill="#333"/><circle cx="-3.4" cy="-3.4" r="0.8" fill="#333"/><circle cx="3.4" cy="-3.4" r="0.8" fill="#333"/><circle cx="3.4" cy="3.4" r="0.8" fill="#333"/><circle cx="-3.4" cy="3.4" r="0.8" fill="#333"/></g></g>
<path d="M508.3,38 V46.2" stroke="#dedede" stroke-width="0.6"/>
<path d="M628.8,38 V46.2" stroke="#dedede" stroke-width="0.6"/>
<path d="M640.3,38 V46.2" stroke="#dedede" stroke-width="0.6"/>
<path d="M705.8,38 V46.2" stroke="#dedede" stroke-width="0.6"/>
<path d="M774.8,38 V46.2" stroke="#dedede" stroke-width="0.6"/>
<path d="M798.8,38 V46.2" stroke="#dedede" stroke-width="0.6"/>
<path d="M158.4,41.5 L160,43.2 L161.6,41.5" fill="none" stroke="#666" stroke-width="0.7"/>
<path d="M327.4,41.5 L329,43.2 L330.6,41.5" fill="none" stroke="#bbb" stroke-width="0.7"/>
<path d="M359.9,41.5 L361.5,43.2 L363.1,41.5" fill="none" stroke="#bbb" stroke-width="0.7"/>
<path d="M566.9,41.5 L568.5,43.2 L570.1,41.5" fill="none" stroke="#666" stroke-width="0.7"/>
<path d="M735.0,41.5 L736.6,43.2 L738.2,41.5" fill="none" stroke="#bbb" stroke-width="0.7"/>
<path d="M767.4,41.5 L769,43.2 L770.6,41.5" fill="none" stroke="#bbb" stroke-width="0.7"/>
<path d="M80.72,29.060000000000002 L83.8,32.14 L86.88,29.060000000000002" fill="none" stroke="#777" stroke-width="0.8"/>
<path d="M98.3,30.7 H92.5" fill="none" stroke="#333" stroke-width="1.1"/><path d="M94.19999999999999,28.599999999999998 L92.1,30.7 L94.19999999999999,32.8" fill="none" stroke="#333" stroke-width="1"/>
<path d="M103.1,30.7 H108.89999999999999" fill="none" stroke="#909090" stroke-width="1"/><path d="M107.2,28.599999999999998 L109.3,30.7 L107.2,32.8" fill="none" stroke="#909090" stroke-width="0.9"/>
<path d="M488.72,29.060000000000002 L491.8,32.14 L494.88,29.060000000000002" fill="none" stroke="#8585a8" stroke-width="0.8"/>
<path d="M506.0,30.7 H500.2" fill="none" stroke="#333" stroke-width="1.1"/><path d="M501.90000000000003,28.599999999999998 L499.8,30.7 L501.90000000000003,32.8" fill="none" stroke="#333" stroke-width="1"/>
<path d="M510.50000000000006,30.7 H516.3000000000001" fill="none" stroke="#909090" stroke-width="1"/><path d="M514.6,28.599999999999998 L516.7,30.7 L514.6,32.8" fill="none" stroke="#909090" stroke-width="0.9"/>
<path d="M520,28.8 V31.6 M520,32.6 V33.4" stroke="#666" stroke-width="0.7"/>
<rect x="458.4" y="26.8" width="7" height="8.4" fill="#e6e6e6" stroke="#cdcdcd" stroke-width="0.5"/><rect x="465.6" y="26.8" width="7" height="8.4" fill="#e6e6e6" stroke="#cdcdcd" stroke-width="0.5"/>
<path d="M463.3,29 L461.3,31.1 L463.3,33.2" fill="none" stroke="#222" stroke-width="0.95"/><path d="M468.4,29 L470.4,31.1 L468.4,33.2" fill="none" stroke="#bcbcbc" stroke-width="0.9"/>
<path d="M475.6,31.1 H481.2 M478.4,28.3 V33.9" stroke="#333" stroke-width="0.95"/>
<rect x="60.2" y="28.4" width="2.6" height="3" fill="#e5e5e5" stroke="#333" stroke-width="0.8"/><path d="M61.2,27.6 H63.7 V30.4" fill="none" stroke="#333" stroke-width="0.8"/>
<path d="M69.7,28 L73.1,31.4 M73.1,28 L69.7,31.4" stroke="#333" stroke-width="0.85"/>
<path d="M10.93,39.065 L12.8,40.935 L14.670000000000002,39.065" fill="none" stroke="#444" stroke-width="0.8"/>
<path d="M10.93,78.965 L12.8,80.83500000000001 L14.670000000000002,78.965" fill="none" stroke="#444" stroke-width="0.8"/>
<g transform="translate(32.1,50.9) scale(0.58)"><circle r="5.2" fill="none" stroke="#444" stroke-width="0.9"/><path d="M0,-2.8600000000000003 V0.3 H2.3400000000000003" fill="none" stroke="#444" stroke-width="0.9"/></g>
<rect x="28.2" y="57.300000000000004" width="6.6" height="6.6" fill="#3f8fd0"/><path d="M28.2,60.6 H34.8 M31.5,57.300000000000004 V63.9" stroke="#7db8e6" stroke-width="0.5"/>
<rect x="28.2" y="87.10000000000001" width="6.6" height="6.6" fill="#3f8fd0"/><path d="M28.2,90.4 H34.8 M31.5,87.10000000000001 V93.7" stroke="#7db8e6" stroke-width="0.5"/>
<g transform="translate(90.9,59.2) scale(0.9)"><path d="M-3.9,4 L-3.1,-1.6 L-2.5,-3.8 H-1.3 L-0.7,-1.6 L-0.45,4 Z M3.9,4 L3.1,-1.6 L2.5,-3.8 H1.3 L0.7,-1.6 L0.45,4 Z" fill="#454545"/><rect x="-0.7" y="-1.7" width="1.4" height="1.5" fill="#454545" opacity="0.85"/></g>
<g transform="translate(498.7,59.2) scale(0.9)"><path d="M-3.9,4 L-3.1,-1.6 L-2.5,-3.8 H-1.3 L-0.7,-1.6 L-0.45,4 Z M3.9,4 L3.1,-1.6 L2.5,-3.8 H1.3 L0.7,-1.6 L0.45,4 Z" fill="#454545"/><rect x="-0.7" y="-1.7" width="1.4" height="1.5" fill="#454545" opacity="0.85"/></g>
<path d="M491,389.6 L489.2,391.3 L491,393" fill="none" stroke="#333" stroke-width="0.8"/>
<circle cx="86.3" cy="414.2" r="3.7" fill="#d93025"/><path d="M84.8,412.7 L87.8,415.7 M87.8,412.7 L84.8,415.7" stroke="#fff" stroke-width="1.1"/>
<path d="M128,410.4 L131.8,417.2 H124.2 Z" fill="#f5c02c"/><path d="M128,412.6 V415 M128,415.8 V416.5" stroke="#fff7d6" stroke-width="0.7"/>
<circle cx="185" cy="414.2" r="3.7" fill="#2d3742"/><path d="M185,413.4 V416 M185,411.8 V412.6" stroke="#fff" stroke-width="0.9"/>
<circle cx="245.3" cy="414.2" r="3.6" fill="#2f64c8"/><path d="M243.6,414.6 L245,413 L246.9,414.8" stroke="#dfe9fb" stroke-width="0.8" fill="none"/>
<circle cx="294.3" cy="414.2" r="3.6" fill="#2d3742"/><circle cx="294.3" cy="414.2" r="1.9" fill="#f1f1f1"/>
<path d="M427.5,411 H433.5 L431.3,413.8 V417 L429.7,416.2 V413.8 Z" fill="#444"/><circle cx="433" cy="416.2" r="1.4" fill="#e05050"/>
<circle cx="806.5" cy="413.5" r="2.5" fill="none" stroke="#36404c" stroke-width="1.3"/><circle cx="806.5" cy="413.5" r="3.4" fill="none" stroke="#36404c" stroke-width="0.9" stroke-dasharray="1.1 1.1"/>
<rect x="813.1" y="410.2" width="7.6" height="7.2" rx="0.6" fill="#36404c"/><rect x="814.8" y="410.2" width="3.6" height="2.5" fill="#d8dde2"/><rect x="814.6" y="414.4" width="4.6" height="3" fill="#e8ebee"/>
<rect x="824" y="410" width="4.2" height="5" fill="#36404c"/><rect x="826.3" y="412" width="4.2" height="5.4" fill="#4a5562" stroke="#f1f1f1" stroke-width="0.4"/>
<rect x="834" y="412.6" width="5.2" height="4.6" fill="#36404c"/><path d="M835.2,412.6 V411.4 A1.5,1.5 0 0 1 838.2,411.2" fill="none" stroke="#36404c" stroke-width="0.8"/><rect x="836.1" y="414.2" width="1" height="1.5" fill="#ddd"/><circle cx="840.8" cy="410.6" r="0.55" fill="#36404c"/>
<g transform="translate(848.6,413.9) scale(0.85)"><rect x="-4.2" y="-1.4" width="8.4" height="4" rx="0.6" fill="#3a3a3a"/><rect x="-2.6" y="-4" width="5.2" height="2.2" fill="#3a3a3a"/><rect x="-2.6" y="1.4" width="5.2" height="2.8" fill="#fff" stroke="#3a3a3a" stroke-width="0.7"/></g>
<path d="M124.7,29.6 L127.7,32.6 M127.7,29.6 L124.7,32.6" stroke="#444" stroke-width="0.8" fill="none"/>
<path d="M177.2,29.6 L180.2,32.6 M180.2,29.6 L177.2,32.6" stroke="#444" stroke-width="0.8" fill="none"/>
<path d="M246.1,29.6 L249.1,32.6 M249.1,29.6 L246.1,32.6" stroke="#444" stroke-width="0.8" fill="none"/>
<path d="M291.7,29.6 L294.7,32.6 M294.7,29.6 L291.7,32.6" stroke="#444" stroke-width="0.8" fill="none"/>
<path d="M337.9,29.6 L340.9,32.6 M340.9,29.6 L337.9,32.6" stroke="#444" stroke-width="0.8" fill="none"/>
<path d="M381.5,29.6 L384.5,32.6 M384.5,29.6 L381.5,32.6" stroke="#444" stroke-width="0.8" fill="none"/>
<path d="M451.4,29.6 L454.4,32.6 M454.4,29.6 L451.4,32.6" stroke="#444" stroke-width="0.8" fill="none"/>
<path d="M538.3,29.6 L541.3,32.6 M541.3,29.6 L538.3,32.6" stroke="#444" stroke-width="0.8" fill="none"/>
<path d="M595.0,29.6 L598.0,32.6 M598.0,29.6 L595.0,32.6" stroke="#444" stroke-width="0.8" fill="none"/>
<path d="M661.8,29.6 L664.8,32.6 M664.8,29.6 L661.8,32.6" stroke="#444" stroke-width="0.8" fill="none"/>
<path d="M729.4,29.6 L732.4,32.6 M732.4,29.6 L729.4,32.6" stroke="#444" stroke-width="0.8" fill="none"/>
<path d="M790.3,29.6 L793.3,32.6 M793.3,29.6 L790.3,32.6" stroke="#444" stroke-width="0.8" fill="none"/>
<path d="M843.5,29.6 L846.5,32.6 M846.5,29.6 L843.5,32.6" stroke="#444" stroke-width="0.8" fill="none"/>
<path d="M129.3,92.8 L129.3,343.8" stroke="#adadad" stroke-width="0.75" fill="none" />
<path d="M439.8,92.8 L439.8,338.6" stroke="#adadad" stroke-width="0.75" fill="none" />
<path d="M129.3,133.8 L439.8,133.8" stroke="#adadad" stroke-width="0.75" fill="none" />
<path d="M129.3,203.8 L439.8,203.8" stroke="#adadad" stroke-width="0.75" fill="none" />
<path d="M317.5,274.0 L439.8,274.0" stroke="#adadad" stroke-width="0.75" fill="none" />
<path d="M111,162.9 L129.3,162.9" stroke="#adadad" stroke-width="0.75" fill="none" />
<text x="131.2" y="163.6" font-size="2.3" fill="#9a9a9a" text-anchor="start">Terminal(1)</text>
<path d="M423,162.9 L457.5,162.9" stroke="#adadad" stroke-width="0.75" fill="none" />
<text x="88" y="164.20000000000002" font-size="3.4" fill="#9a9a9a" text-anchor="start">SOL132(SOL...</text>
<text x="398.2" y="164.20000000000002" font-size="3.4" fill="#9a9a9a" text-anchor="start">SOL132(SOL...</text>
<text x="131.2" y="166.70000000000002" font-size="2.3" fill="#a5a5a5" text-anchor="start">132kV 1 busbar system</text>
<path d="M164.6,133.8 L164.6,115.5 L187.9,115.5 L187.9,133.8" stroke="#b6b6b6" stroke-width="0.7" fill="none" />
<rect x="174.95" y="114.5" width="2.6" height="2" fill="#fff"/>
<path d="M175.35,112.1 L175.35,119.7" stroke="#8a8a8a" stroke-width="0.55" fill="none" />
<path d="M177.15,112.1 L177.15,119.7" stroke="#8a8a8a" stroke-width="0.55" fill="none" />
<text x="175.45" y="123.9" font-size="4.8" fill="#8e8e8e" text-anchor="middle">CB1</text>
<path d="M164.6,133.8 L164.6,144.6" stroke="#b6b6b6" stroke-width="0.7" fill="none" />
<rect x="162.29999999999998" y="144.29999999999998" width="4.6" height="1.4" fill="#777"/>
<path d="M163.0,146.5 L166.2,146.5" stroke="#aaa" stroke-width="0.5" fill="none" />
<path d="M163.7,147.4 L165.5,147.4" stroke="#bbb" stroke-width="0.4" fill="none" />
<path d="M169.2,145.0 L170.4,147.4" stroke="#444" stroke-width="1.1"/>
<circle cx="164.6" cy="133.8" r="1.0" fill="#666"/>
<path d="M187.9,133.8 L187.9,144.6" stroke="#b6b6b6" stroke-width="0.7" fill="none" />
<rect x="185.6" y="144.29999999999998" width="4.6" height="1.4" fill="#777"/>
<path d="M186.3,146.5 L189.5,146.5" stroke="#aaa" stroke-width="0.5" fill="none" />
<path d="M187.0,147.4 L188.8,147.4" stroke="#bbb" stroke-width="0.4" fill="none" />
<path d="M192.5,145.0 L193.70000000000002,147.4" stroke="#444" stroke-width="1.1"/>
<circle cx="187.9" cy="133.8" r="1.0" fill="#666"/>
<text x="164.1" y="154.0" font-size="2.5" fill="#b4b4b4" text-anchor="middle">ES-B1-1</text>
<text x="187.4" y="154.0" font-size="2.5" fill="#b4b4b4" text-anchor="middle">ES-B1-2</text>
<text x="176.25" y="135.70000000000002" font-size="2.5" fill="#999" text-anchor="middle">&#8226;</text>
<path d="M264.0,133.8 L264.0,115.5 L287.0,115.5 L287.0,133.8" stroke="#b6b6b6" stroke-width="0.7" fill="none" />
<rect x="274.2" y="114.5" width="2.6" height="2" fill="#fff"/>
<path d="M274.6,112.1 L274.6,119.7" stroke="#8a8a8a" stroke-width="0.55" fill="none" />
<path d="M276.4,112.1 L276.4,119.7" stroke="#8a8a8a" stroke-width="0.55" fill="none" />
<text x="274.7" y="123.9" font-size="4.8" fill="#8e8e8e" text-anchor="middle">CB2</text>
<path d="M264.0,133.8 L264.0,156.4" stroke="#b6b6b6" stroke-width="0.7" fill="none" />
<rect x="261.7" y="156.1" width="4.6" height="1.4" fill="#777"/>
<path d="M262.4,158.3 L265.6,158.3" stroke="#aaa" stroke-width="0.5" fill="none" />
<path d="M263.1,159.20000000000002 L264.9,159.20000000000002" stroke="#bbb" stroke-width="0.4" fill="none" />
<path d="M268.6,156.8 L269.8,159.20000000000002" stroke="#444" stroke-width="1.1"/>
<circle cx="264.0" cy="133.8" r="1.0" fill="#666"/>
<path d="M287.0,133.8 L287.0,156.4" stroke="#b6b6b6" stroke-width="0.7" fill="none" />
<rect x="284.7" y="156.1" width="4.6" height="1.4" fill="#777"/>
<path d="M285.4,158.3 L288.6,158.3" stroke="#aaa" stroke-width="0.5" fill="none" />
<path d="M286.1,159.20000000000002 L287.9,159.20000000000002" stroke="#bbb" stroke-width="0.4" fill="none" />
<path d="M291.6,156.8 L292.8,159.20000000000002" stroke="#444" stroke-width="1.1"/>
<circle cx="287.0" cy="133.8" r="1.0" fill="#666"/>
<text x="263.5" y="165.8" font-size="2.5" fill="#b4b4b4" text-anchor="middle">ES-B1-1</text>
<text x="286.5" y="165.8" font-size="2.5" fill="#b4b4b4" text-anchor="middle">ES-B1-2</text>
<text x="275.5" y="135.70000000000002" font-size="2.5" fill="#999" text-anchor="middle">&#8226;</text>
<path d="M363.5,133.8 L363.5,115.5 L387.3,115.5 L387.3,133.8" stroke="#b6b6b6" stroke-width="0.7" fill="none" />
<rect x="374.09999999999997" y="114.5" width="2.6" height="2" fill="#fff"/>
<path d="M374.5,112.1 L374.5,119.7" stroke="#8a8a8a" stroke-width="0.55" fill="none" />
<path d="M376.29999999999995,112.1 L376.29999999999995,119.7" stroke="#8a8a8a" stroke-width="0.55" fill="none" />
<text x="374.59999999999997" y="123.9" font-size="4.8" fill="#8e8e8e" text-anchor="middle">CB3</text>
<path d="M363.5,133.8 L363.5,150.2" stroke="#b6b6b6" stroke-width="0.7" fill="none" />
<rect x="361.2" y="149.89999999999998" width="4.6" height="1.4" fill="#777"/>
<path d="M361.9,152.1 L365.1,152.1" stroke="#aaa" stroke-width="0.5" fill="none" />
<path d="M362.6,153.0 L364.4,153.0" stroke="#bbb" stroke-width="0.4" fill="none" />
<path d="M368.1,150.6 L369.3,153.0" stroke="#444" stroke-width="1.1"/>
<circle cx="363.5" cy="133.8" r="1.0" fill="#666"/>
<path d="M387.3,133.8 L387.3,150.2" stroke="#b6b6b6" stroke-width="0.7" fill="none" />
<rect x="385.0" y="149.89999999999998" width="4.6" height="1.4" fill="#777"/>
<path d="M385.7,152.1 L388.90000000000003,152.1" stroke="#aaa" stroke-width="0.5" fill="none" />
<path d="M386.40000000000003,153.0 L388.2,153.0" stroke="#bbb" stroke-width="0.4" fill="none" />
<path d="M391.90000000000003,150.6 L393.1,153.0" stroke="#444" stroke-width="1.1"/>
<circle cx="387.3" cy="133.8" r="1.0" fill="#666"/>
<text x="363.0" y="159.6" font-size="2.5" fill="#b4b4b4" text-anchor="middle">ES-B1-1</text>
<text x="386.8" y="159.6" font-size="2.5" fill="#b4b4b4" text-anchor="middle">ES-B1-2</text>
<text x="375.4" y="135.70000000000002" font-size="2.5" fill="#999" text-anchor="middle">&#8226;</text>
<path d="M164.6,203.8 L164.6,186.2 L187.9,186.2 L187.9,203.8" stroke="#b6b6b6" stroke-width="0.7" fill="none" />
<rect x="174.75" y="183.2" width="3" height="5.4" fill="#fff" stroke="#8a8a8a" stroke-width="0.55"/>
<text x="175.45" y="194.6" font-size="4.8" fill="#8e8e8e" text-anchor="middle">CB4</text>
<path d="M164.6,203.8 L164.6,214.6" stroke="#b6b6b6" stroke-width="0.7" fill="none" />
<rect x="162.29999999999998" y="214.29999999999998" width="4.6" height="1.4" fill="#777"/>
<path d="M163.0,216.5 L166.2,216.5" stroke="#aaa" stroke-width="0.5" fill="none" />
<path d="M163.7,217.4 L165.5,217.4" stroke="#bbb" stroke-width="0.4" fill="none" />
<path d="M169.2,215.0 L170.4,217.4" stroke="#444" stroke-width="1.1"/>
<circle cx="164.6" cy="203.8" r="1.0" fill="#666"/>
<path d="M187.9,203.8 L187.9,214.6" stroke="#b6b6b6" stroke-width="0.7" fill="none" />
<rect x="185.6" y="214.29999999999998" width="4.6" height="1.4" fill="#777"/>
<path d="M186.3,216.5 L189.5,216.5" stroke="#aaa" stroke-width="0.5" fill="none" />
<path d="M187.0,217.4 L188.8,217.4" stroke="#bbb" stroke-width="0.4" fill="none" />
<path d="M192.5,215.0 L193.70000000000002,217.4" stroke="#444" stroke-width="1.1"/>
<circle cx="187.9" cy="203.8" r="1.0" fill="#666"/>
<text x="164.1" y="224.0" font-size="2.5" fill="#b4b4b4" text-anchor="middle">ES-B1-1</text>
<text x="187.4" y="224.0" font-size="2.5" fill="#b4b4b4" text-anchor="middle">ES-B1-2</text>
<text x="176.25" y="205.70000000000002" font-size="2.5" fill="#999" text-anchor="middle">&#8226;</text>
<path d="M264.0,203.8 L264.0,186.2 L287.0,186.2 L287.0,203.8" stroke="#b6b6b6" stroke-width="0.7" fill="none" />
<rect x="274.0" y="183.2" width="3" height="5.4" fill="#fff" stroke="#8a8a8a" stroke-width="0.55"/>
<text x="274.7" y="194.6" font-size="4.8" fill="#8e8e8e" text-anchor="middle">CB5</text>
<path d="M264.0,203.8 L264.0,226.4" stroke="#b6b6b6" stroke-width="0.7" fill="none" />
<rect x="261.7" y="226.1" width="4.6" height="1.4" fill="#777"/>
<path d="M262.4,228.3 L265.6,228.3" stroke="#aaa" stroke-width="0.5" fill="none" />
<path d="M263.1,229.20000000000002 L264.9,229.20000000000002" stroke="#bbb" stroke-width="0.4" fill="none" />
<path d="M268.6,226.8 L269.8,229.20000000000002" stroke="#444" stroke-width="1.1"/>
<circle cx="264.0" cy="203.8" r="1.0" fill="#666"/>
<path d="M287.0,203.8 L287.0,226.4" stroke="#b6b6b6" stroke-width="0.7" fill="none" />
<rect x="284.7" y="226.1" width="4.6" height="1.4" fill="#777"/>
<path d="M285.4,228.3 L288.6,228.3" stroke="#aaa" stroke-width="0.5" fill="none" />
<path d="M286.1,229.20000000000002 L287.9,229.20000000000002" stroke="#bbb" stroke-width="0.4" fill="none" />
<path d="M291.6,226.8 L292.8,229.20000000000002" stroke="#444" stroke-width="1.1"/>
<circle cx="287.0" cy="203.8" r="1.0" fill="#666"/>
<text x="263.5" y="235.8" font-size="2.5" fill="#b4b4b4" text-anchor="middle">ES-B1-1</text>
<text x="286.5" y="235.8" font-size="2.5" fill="#b4b4b4" text-anchor="middle">ES-B1-2</text>
<text x="275.5" y="205.70000000000002" font-size="2.5" fill="#999" text-anchor="middle">&#8226;</text>
<path d="M363.5,203.8 L363.5,186.2 L387.3,186.2 L387.3,203.8" stroke="#b6b6b6" stroke-width="0.7" fill="none" />
<rect x="374.09999999999997" y="185.2" width="2.6" height="2" fill="#fff"/>
<path d="M374.5,182.79999999999998 L374.5,190.39999999999998" stroke="#8a8a8a" stroke-width="0.55" fill="none" />
<path d="M376.29999999999995,182.79999999999998 L376.29999999999995,190.39999999999998" stroke="#8a8a8a" stroke-width="0.55" fill="none" />
<text x="374.59999999999997" y="194.6" font-size="4.8" fill="#8e8e8e" text-anchor="middle">CB6</text>
<path d="M363.5,203.8 L363.5,214.6" stroke="#b6b6b6" stroke-width="0.7" fill="none" />
<rect x="361.2" y="214.29999999999998" width="4.6" height="1.4" fill="#777"/>
<path d="M361.9,216.5 L365.1,216.5" stroke="#aaa" stroke-width="0.5" fill="none" />
<path d="M362.6,217.4 L364.4,217.4" stroke="#bbb" stroke-width="0.4" fill="none" />
<path d="M368.1,215.0 L369.3,217.4" stroke="#444" stroke-width="1.1"/>
<circle cx="363.5" cy="203.8" r="1.0" fill="#666"/>
<path d="M387.3,203.8 L387.3,214.6" stroke="#b6b6b6" stroke-width="0.7" fill="none" />
<rect x="385.0" y="214.29999999999998" width="4.6" height="1.4" fill="#777"/>
<path d="M385.7,216.5 L388.90000000000003,216.5" stroke="#aaa" stroke-width="0.5" fill="none" />
<path d="M386.40000000000003,217.4 L388.2,217.4" stroke="#bbb" stroke-width="0.4" fill="none" />
<path d="M391.90000000000003,215.0 L393.1,217.4" stroke="#444" stroke-width="1.1"/>
<circle cx="387.3" cy="203.8" r="1.0" fill="#666"/>
<text x="363.0" y="224.0" font-size="2.5" fill="#b4b4b4" text-anchor="middle">ES-B1-1</text>
<text x="386.8" y="224.0" font-size="2.5" fill="#b4b4b4" text-anchor="middle">ES-B1-2</text>
<text x="375.4" y="205.70000000000002" font-size="2.5" fill="#999" text-anchor="middle">&#8226;</text>
<path d="M375.2,274.0 L375.2,256.4 L399.0,256.4 L399.0,274.0" stroke="#b6b6b6" stroke-width="0.7" fill="none" />
<rect x="385.8" y="255.39999999999998" width="2.6" height="2" fill="#fff"/>
<path d="M386.20000000000005,252.99999999999997 L386.20000000000005,260.59999999999997" stroke="#8a8a8a" stroke-width="0.55" fill="none" />
<path d="M388.0,252.99999999999997 L388.0,260.59999999999997" stroke="#8a8a8a" stroke-width="0.55" fill="none" />
<text x="386.3" y="263.59999999999997" font-size="4.2" fill="#8e8e8e" text-anchor="middle">CB7</text>
<path d="M375.2,274.0 L375.2,296.2" stroke="#b6b6b6" stroke-width="0.7" fill="none" />
<rect x="372.9" y="295.9" width="4.6" height="1.4" fill="#777"/>
<path d="M373.59999999999997,298.09999999999997 L376.8,298.09999999999997" stroke="#aaa" stroke-width="0.5" fill="none" />
<path d="M374.3,299.0 L376.09999999999997,299.0" stroke="#bbb" stroke-width="0.4" fill="none" />
<path d="M379.8,296.59999999999997 L381.0,299.0" stroke="#444" stroke-width="1.1"/>
<circle cx="375.2" cy="274.0" r="1.0" fill="#666"/>
<path d="M399.0,274.0 L399.0,296.2" stroke="#b6b6b6" stroke-width="0.7" fill="none" />
<rect x="396.7" y="295.9" width="4.6" height="1.4" fill="#777"/>
<path d="M397.4,298.09999999999997 L400.6,298.09999999999997" stroke="#aaa" stroke-width="0.5" fill="none" />
<path d="M398.1,299.0 L399.9,299.0" stroke="#bbb" stroke-width="0.4" fill="none" />
<path d="M403.6,296.59999999999997 L404.8,299.0" stroke="#444" stroke-width="1.1"/>
<circle cx="399.0" cy="274.0" r="1.0" fill="#666"/>
<text x="374.7" y="305.59999999999997" font-size="2.5" fill="#b4b4b4" text-anchor="middle">ES-B1-1</text>
<text x="398.5" y="305.59999999999997" font-size="2.5" fill="#b4b4b4" text-anchor="middle">ES-B1-2</text>
<text x="387.1" y="275.9" font-size="2.5" fill="#999" text-anchor="middle">&#8226;</text>
<circle cx="129.3" cy="92.8" r="1.1" fill="#666"/>
<circle cx="129.3" cy="133.8" r="1.1" fill="#666"/>
<circle cx="129.3" cy="162.9" r="1.1" fill="#666"/>
<circle cx="129.3" cy="203.8" r="1.1" fill="#666"/>
<circle cx="129.3" cy="279.6" r="1.1" fill="#666"/>
<circle cx="129.3" cy="343.8" r="1.1" fill="#666"/>
<circle cx="439.8" cy="92.8" r="1.1" fill="#666"/>
<circle cx="439.8" cy="133.8" r="1.1" fill="#666"/>
<circle cx="439.8" cy="162.9" r="1.1" fill="#666"/>
<circle cx="439.8" cy="203.8" r="1.1" fill="#666"/>
<circle cx="439.8" cy="274.0" r="1.1" fill="#666"/>
<circle cx="439.8" cy="338.6" r="1.1" fill="#666"/>
<circle cx="228.7" cy="133.8" r="1.1" fill="#666"/>
<circle cx="322.7" cy="133.8" r="1.1" fill="#666"/>
<circle cx="223" cy="203.8" r="1.1" fill="#666"/>
<circle cx="322.7" cy="203.8" r="1.1" fill="#666"/>
<circle cx="340.2" cy="274.0" r="1.1" fill="#666"/>
<path d="M228.7,133.8 L222.2,161.8" stroke="#5e5e5e" stroke-width="0.55" fill="none" />
<path d="M228.7,133.8 L228.7,153" stroke="#9a9a9a" stroke-width="0.5" fill="none" />
<rect x="220.89999999999998" y="161.20000000000002" width="3" height="1.6" fill="#999"/>
<path d="M225.79999999999998,162.60000000000002 L227.2,164.4" stroke="#555" stroke-width="0.8"/>
<text x="220.2" y="168.3" font-size="1.9" fill="#c0c0c0" text-anchor="middle">F1-1</text>
<path d="M228.7,149 L228.7,153" stroke="#888" stroke-width="0.6" fill="none" />
<rect x="227.39999999999998" y="153" width="2.6" height="6.400000000000006" fill="#5a5a5a"/>
<path d="M227.39999999999998,155.304 L230.0,155.304" stroke="#ddd" stroke-width="0.5" fill="none" />
<path d="M227.39999999999998,157.352 L230.0,157.352" stroke="#ddd" stroke-width="0.5" fill="none" />
<path d="M228.7,159.4 L228.7,161.0" stroke="#888" stroke-width="0.6" fill="none" />
<path d="M226.89999999999998,161.20000000000002 L230.5,161.20000000000002" stroke="#777" stroke-width="0.7" fill="none" />
<path d="M227.7,162.3 L229.7,162.3" stroke="#aaa" stroke-width="0.5" fill="none" />
<rect x="228.0" y="164.0" width="1.4" height="1.3" fill="#666"/>
<rect x="228.1" y="166.6" width="1.2" height="1.1" fill="#777"/>
<path d="M322.7,133.8 L311,156" stroke="#5e5e5e" stroke-width="0.55" fill="none" />
<path d="M322.7,133.8 L322.7,141" stroke="#9a9a9a" stroke-width="0.5" fill="none" />
<rect x="309.7" y="155.4" width="3" height="1.6" fill="#999"/>
<path d="M314.6,156.8 L316,158.6" stroke="#555" stroke-width="0.8"/>
<text x="309" y="162.5" font-size="1.9" fill="#c0c0c0" text-anchor="middle">F1-1</text>
<path d="M322.7,137 L322.7,141" stroke="#888" stroke-width="0.6" fill="none" />
<rect x="321.4" y="141" width="2.6" height="6.400000000000006" fill="#5a5a5a"/>
<path d="M321.4,143.304 L324.0,143.304" stroke="#ddd" stroke-width="0.5" fill="none" />
<path d="M321.4,145.352 L324.0,145.352" stroke="#ddd" stroke-width="0.5" fill="none" />
<path d="M322.7,147.4 L322.7,149.0" stroke="#888" stroke-width="0.6" fill="none" />
<path d="M320.9,149.20000000000002 L324.5,149.20000000000002" stroke="#777" stroke-width="0.7" fill="none" />
<path d="M321.7,150.3 L323.7,150.3" stroke="#aaa" stroke-width="0.5" fill="none" />
<rect x="322.0" y="152.0" width="1.4" height="1.3" fill="#666"/>
<rect x="322.09999999999997" y="154.6" width="1.2" height="1.1" fill="#777"/>
<path d="M223,203.8 L217,232" stroke="#5e5e5e" stroke-width="0.55" fill="none" />
<path d="M223,203.8 L223,222.5" stroke="#9a9a9a" stroke-width="0.5" fill="none" />
<rect x="215.7" y="231.4" width="3" height="1.6" fill="#999"/>
<path d="M220.6,232.8 L222,234.6" stroke="#555" stroke-width="0.8"/>
<text x="215" y="238.5" font-size="1.9" fill="#c0c0c0" text-anchor="middle">F1-1</text>
<path d="M223,218.5 L223,222.5" stroke="#888" stroke-width="0.6" fill="none" />
<rect x="221.7" y="222.5" width="2.6" height="6.5" fill="#5a5a5a"/>
<path d="M221.7,224.84 L224.3,224.84" stroke="#ddd" stroke-width="0.5" fill="none" />
<path d="M221.7,226.92 L224.3,226.92" stroke="#ddd" stroke-width="0.5" fill="none" />
<path d="M223,229 L223,230.6" stroke="#888" stroke-width="0.6" fill="none" />
<path d="M221.2,230.8 L224.8,230.8" stroke="#777" stroke-width="0.7" fill="none" />
<path d="M222,231.9 L224,231.9" stroke="#aaa" stroke-width="0.5" fill="none" />
<rect x="222.3" y="233.6" width="1.4" height="1.3" fill="#666"/>
<rect x="222.4" y="236.2" width="1.2" height="1.1" fill="#777"/>
<path d="M322.7,203.8 L312,232" stroke="#5e5e5e" stroke-width="0.55" fill="none" />
<path d="M322.7,203.8 L322.7,222.6" stroke="#9a9a9a" stroke-width="0.5" fill="none" />
<rect x="310.7" y="231.4" width="3" height="1.6" fill="#999"/>
<path d="M315.6,232.8 L317,234.6" stroke="#555" stroke-width="0.8"/>
<text x="310" y="238.5" font-size="1.9" fill="#c0c0c0" text-anchor="middle">F1-1</text>
<path d="M322.7,218.6 L322.7,222.6" stroke="#888" stroke-width="0.6" fill="none" />
<rect x="321.4" y="222.6" width="2.6" height="6.400000000000006" fill="#5a5a5a"/>
<path d="M321.4,224.904 L324.0,224.904" stroke="#ddd" stroke-width="0.5" fill="none" />
<path d="M321.4,226.952 L324.0,226.952" stroke="#ddd" stroke-width="0.5" fill="none" />
<path d="M322.7,229 L322.7,230.6" stroke="#888" stroke-width="0.6" fill="none" />
<path d="M320.9,230.8 L324.5,230.8" stroke="#777" stroke-width="0.7" fill="none" />
<path d="M321.7,231.9 L323.7,231.9" stroke="#aaa" stroke-width="0.5" fill="none" />
<rect x="322.0" y="233.6" width="1.4" height="1.3" fill="#666"/>
<rect x="322.09999999999997" y="236.2" width="1.2" height="1.1" fill="#777"/>
<text x="130.4" y="175.8" font-size="3" fill="#7a7a7a" text-anchor="start">MC</text>
<path d="M135,174.9 L223,174.9 L223,203.8" stroke="#9a9a9a" stroke-width="0.65" fill="none" />
<rect x="222.3" y="206.4" width="1.4" height="1.6" fill="#666"/>
<path d="M340.2,250.5 L340.2,293" stroke="#888" stroke-width="0.7" fill="none" />
<rect x="338.4" y="249.6" width="3.6" height="1.6" fill="#999"/>
<path d="M334.2,248 L335.6,250" stroke="#555" stroke-width="0.9"/>
<text x="340" y="241.5" font-size="1.9" fill="#b8b8b8" text-anchor="middle">ES-L1</text>
<path d="M340.2,289.5 L340.2,293.5" stroke="#888" stroke-width="0.6" fill="none" />
<rect x="338.9" y="293.5" width="2.6" height="4.899999999999977" fill="#5a5a5a"/>
<path d="M338.9,295.264 L341.5,295.264" stroke="#ddd" stroke-width="0.5" fill="none" />
<path d="M338.9,296.832 L341.5,296.832" stroke="#ddd" stroke-width="0.5" fill="none" />
<path d="M340.2,298.4 L340.2,300.0" stroke="#888" stroke-width="0.6" fill="none" />
<path d="M338.4,300.2 L342.0,300.2" stroke="#777" stroke-width="0.7" fill="none" />
<path d="M339.2,301.29999999999995 L341.2,301.29999999999995" stroke="#aaa" stroke-width="0.5" fill="none" />
<rect x="339.5" y="303.0" width="1.4" height="1.3" fill="#666"/>
<rect x="339.59999999999997" y="305.59999999999997" width="1.2" height="1.1" fill="#777"/>
<text x="333" y="298" font-size="1.9" fill="#b8b8b8" text-anchor="middle" transform="rotate(-90 333 298)">SA-L1</text>
<path d="M299.6,268.4 L299.6,264 L300.6,263 L317.2,263 L317.2,274.0" stroke="#858585" stroke-width="0.8" fill="none" />
<circle cx="299" cy="271.4" r="2.5" fill="none" stroke="#5a5a5a" stroke-width="0.65"/><circle cx="301.2" cy="274.8" r="2.5" fill="none" stroke="#5a5a5a" stroke-width="0.65"/><circle cx="298.2" cy="277.6" r="2.4" fill="none" stroke="#666" stroke-width="0.65"/>
<path d="M297.6,280.6 L299.6,285 L301.2,280.8" fill="none" stroke="#777" stroke-width="0.55"/>
<path d="M300.4,272.6 L302,274.2 M297,276 L298.4,279" stroke="#333" stroke-width="0.9"/>
<path d="M304.6,268.6 L309.4,268.3" stroke="#666" stroke-width="0.55"/><circle cx="310.8" cy="268.2" r="0.9" fill="#444"/>
<text x="291.6" y="273.5" font-size="2.4" fill="#b4b4b4" text-anchor="middle" transform="rotate(-90 291.6 273.5)">132/33kV TX1 45MVA 2-Winding</text>
<text x="288.8" y="273.5" font-size="2.4" fill="#bcbcbc" text-anchor="middle" transform="rotate(-90 288.8 273.5)">Transformer TX1 45MVA</text>
<text x="147" y="128.8" font-size="2.2" fill="#b8b8b8" text-anchor="middle">Bay1_1</text>
<text x="147" y="131.4" font-size="2.55" fill="#a0a0a0" text-anchor="middle">NA2 T1a.T1 busbar system</text>
<text x="208" y="128.8" font-size="2.2" fill="#b8b8b8" text-anchor="middle">Bay1_2</text>
<text x="208" y="131.4" font-size="2.55" fill="#a0a0a0" text-anchor="middle">NA2 T1a.T1 busbar system</text>
<text x="246" y="128.8" font-size="2.2" fill="#b8b8b8" text-anchor="middle">Bay1_3</text>
<text x="246" y="131.4" font-size="2.55" fill="#a0a0a0" text-anchor="middle">NA2 T1a.T1 busbar system</text>
<text x="305" y="128.8" font-size="2.2" fill="#b8b8b8" text-anchor="middle">Bay1_4</text>
<text x="305" y="131.4" font-size="2.55" fill="#a0a0a0" text-anchor="middle">NA2 T1a.T1 busbar system</text>
<text x="343" y="128.8" font-size="2.2" fill="#b8b8b8" text-anchor="middle">Bay1_5</text>
<text x="343" y="131.4" font-size="2.55" fill="#a0a0a0" text-anchor="middle">NA2 T1a.T1 busbar system</text>
<text x="413" y="128.8" font-size="2.2" fill="#b8b8b8" text-anchor="middle">Bay1_6</text>
<text x="413" y="131.4" font-size="2.55" fill="#a0a0a0" text-anchor="middle">NA2 T1a.T1 busbar system</text>
<text x="147" y="198.8" font-size="2.2" fill="#b8b8b8" text-anchor="middle">Bay2_1</text>
<text x="147" y="201.4" font-size="2.55" fill="#a0a0a0" text-anchor="middle">NA2 T1a.T1 busbar system</text>
<text x="205" y="198.8" font-size="2.2" fill="#b8b8b8" text-anchor="middle">Bay2_2</text>
<text x="205" y="201.4" font-size="2.55" fill="#a0a0a0" text-anchor="middle">NA2 T1a.T1 busbar system</text>
<text x="243" y="198.8" font-size="2.2" fill="#b8b8b8" text-anchor="middle">Bay2_3</text>
<text x="243" y="201.4" font-size="2.55" fill="#a0a0a0" text-anchor="middle">NA2 T1a.T1 busbar system</text>
<text x="305" y="198.8" font-size="2.2" fill="#b8b8b8" text-anchor="middle">Bay2_4</text>
<text x="305" y="201.4" font-size="2.55" fill="#a0a0a0" text-anchor="middle">NA2 T1a.T1 busbar system</text>
<text x="343" y="198.8" font-size="2.2" fill="#b8b8b8" text-anchor="middle">Bay2_5</text>
<text x="343" y="201.4" font-size="2.55" fill="#a0a0a0" text-anchor="middle">NA2 T1a.T1 busbar system</text>
<text x="401" y="198.8" font-size="2.2" fill="#b8b8b8" text-anchor="middle">Bay2_6</text>
<text x="401" y="201.4" font-size="2.55" fill="#a0a0a0" text-anchor="middle">NA2 T1a.T1 busbar system</text>
<text x="357" y="269.0" font-size="2.2" fill="#b8b8b8" text-anchor="middle">Bay3_1</text>
<text x="357" y="271.6" font-size="2.55" fill="#a0a0a0" text-anchor="middle">NA2 T1a.T1 busbar system</text>
<text x="419" y="269.0" font-size="2.2" fill="#b8b8b8" text-anchor="middle">Bay3_2</text>
<text x="419" y="271.6" font-size="2.55" fill="#a0a0a0" text-anchor="middle">NA2 T1a.T1 busbar system</text>
<text x="123.10000000000001" y="115" font-size="2.2" fill="#b8b8b8" text-anchor="middle" transform="rotate(-90 123.10000000000001 115)">BB1_1</text>
<text x="126.70000000000002" y="113" font-size="2.55" fill="#a0a0a0" text-anchor="middle" transform="rotate(-90 126.70000000000002 113)">NA2 T1a.T1 busbar system</text>
<text x="123.10000000000001" y="150" font-size="2.2" fill="#b8b8b8" text-anchor="middle" transform="rotate(-90 123.10000000000001 150)">BB1_1</text>
<text x="126.70000000000002" y="148" font-size="2.55" fill="#a0a0a0" text-anchor="middle" transform="rotate(-90 126.70000000000002 148)">NA2 T1a.T1 busbar system</text>
<text x="123.10000000000001" y="185" font-size="2.2" fill="#b8b8b8" text-anchor="middle" transform="rotate(-90 123.10000000000001 185)">BB1_1</text>
<text x="126.70000000000002" y="183" font-size="2.55" fill="#a0a0a0" text-anchor="middle" transform="rotate(-90 126.70000000000002 183)">NA2 T1a.T1 busbar system</text>
<text x="123.10000000000001" y="244" font-size="2.2" fill="#b8b8b8" text-anchor="middle" transform="rotate(-90 123.10000000000001 244)">BB1_1</text>
<text x="126.70000000000002" y="242" font-size="2.55" fill="#a0a0a0" text-anchor="middle" transform="rotate(-90 126.70000000000002 242)">NA2 T1a.T1 busbar system</text>
<text x="123.10000000000001" y="313" font-size="2.2" fill="#b8b8b8" text-anchor="middle" transform="rotate(-90 123.10000000000001 313)">BB1_1</text>
<text x="126.70000000000002" y="311" font-size="2.55" fill="#a0a0a0" text-anchor="middle" transform="rotate(-90 126.70000000000002 311)">NA2 T1a.T1 busbar system</text>
<text x="433.6" y="115" font-size="2.2" fill="#b8b8b8" text-anchor="middle" transform="rotate(-90 433.6 115)">BB1_1</text>
<text x="437.2" y="113" font-size="2.55" fill="#a0a0a0" text-anchor="middle" transform="rotate(-90 437.2 113)">NA2 T1a.T1 busbar system</text>
<text x="433.6" y="150" font-size="2.2" fill="#b8b8b8" text-anchor="middle" transform="rotate(-90 433.6 150)">BB1_1</text>
<text x="437.2" y="148" font-size="2.55" fill="#a0a0a0" text-anchor="middle" transform="rotate(-90 437.2 148)">NA2 T1a.T1 busbar system</text>
<text x="433.6" y="185" font-size="2.2" fill="#b8b8b8" text-anchor="middle" transform="rotate(-90 433.6 185)">BB1_1</text>
<text x="437.2" y="183" font-size="2.55" fill="#a0a0a0" text-anchor="middle" transform="rotate(-90 437.2 183)">NA2 T1a.T1 busbar system</text>
<text x="433.6" y="241" font-size="2.2" fill="#b8b8b8" text-anchor="middle" transform="rotate(-90 433.6 241)">BB1_1</text>
<text x="437.2" y="239" font-size="2.55" fill="#a0a0a0" text-anchor="middle" transform="rotate(-90 437.2 239)">NA2 T1a.T1 busbar system</text>
<text x="433.6" y="308" font-size="2.2" fill="#b8b8b8" text-anchor="middle" transform="rotate(-90 433.6 308)">BB1_1</text>
<text x="437.2" y="306" font-size="2.55" fill="#a0a0a0" text-anchor="middle" transform="rotate(-90 437.2 306)">NA2 T1a.T1 busbar system</text>
<path d="M129.3,343.8 L184.4,337.9" stroke="#48cbd0" stroke-width="0.7" fill="none" />
<circle cx="187.9" cy="337.8" r="3.4" fill="none" stroke="#48cbd0" stroke-width="0.7"/>
<path d="M186.6,337.2 C187.2,336 188,339.6 189.2,338" fill="none" stroke="#48cbd0" stroke-width="0.5"/>
<path d="M192.6,325.5 L194.6,350" stroke="#48cbd0" stroke-width="0.8" stroke-dasharray="1.6 0.4" opacity="0.55"/>
<path d="M131,343.2 L133.4,342.2 V344.4 Z" fill="#48cbd0"/>
<circle cx="129.3" cy="343.8" r="1.1" fill="#3a8f98"/>
<path d="M486,150.3 L850,150.3" stroke="#f2a548" stroke-width="0.75" fill="none" />
<path d="M486,185.2 L850,185.2" stroke="#606060" stroke-width="0.45" fill="none" />
<path d="M530.1,185 L530.1,309.6" stroke="#8e8e8e" stroke-width="0.45" fill="none" />
<path d="M514.7,235.5 L530.1,235.5" stroke="#9a9a9a" stroke-width="0.45" fill="none" />
<path d="M530.1,251.8 L561.5,251.8" stroke="#9a9a9a" stroke-width="0.45" fill="none" />
<path d="M530.1,150.3 L530.1,165.2" stroke="#f2a548" stroke-width="0.9" fill="none" />
<circle cx="530.1" cy="150.3" r="0.95" fill="#e8902a"/>
<circle cx="530.1" cy="157.4" r="0.95" fill="#e8902a"/>
<circle cx="530.1" cy="161.4" r="0.95" fill="#e8902a"/>
<circle cx="530.1" cy="165.2" r="0.95" fill="#e8902a"/>
<path d="M530.1,185 L530.1,220.2" stroke="#f2a548" stroke-width="0.7" fill="none" />
<path d="M516.3,226 L514.7,222.8 L514.7,161.4 L530.1,161.4" stroke="#f2a548" stroke-width="0.7" fill="none" />
<path d="M530.1,157.5 L561.5,157.5 L561.5,251.8" stroke="#f2a548" stroke-width="0.7" fill="none" />
<path d="M516.3,226 L514.5,235.5" stroke="#f2a548" stroke-width="0.6" fill="none" />
<path d="M530.1,165.2 L545.9,165.2 L545.9,220.2" stroke="#f2a548" stroke-width="0.7" fill="none" />
<path d="M545.9,193.1 L553.5,193.1 L553.5,220.2 L530.1,220.2" stroke="#f2a548" stroke-width="0.7" fill="none" />
<rect x="544.4" y="207.2" width="3" height="2" fill="#fff" stroke="#f2a548" stroke-width="0.6"/>
<circle cx="553.5" cy="199" r="0.55" fill="#e08a28"/>
<circle cx="553.5" cy="203" r="0.55" fill="#e08a28"/>
<circle cx="553.5" cy="207" r="0.55" fill="#e08a28"/>
<circle cx="553.5" cy="211" r="0.55" fill="#e08a28"/>
<path d="M514.7,208.2 L506.4,208.2 L506.4,235.5 L514.7,235.5" stroke="#f2a548" stroke-width="0.7" fill="none" />
<rect x="515.0" y="223.4" width="3" height="2" fill="#fff" stroke="#f2a548" stroke-width="0.6"/>
<circle cx="506.4" cy="216" r="0.55" fill="#e08a28"/>
<circle cx="506.4" cy="221" r="0.55" fill="#e08a28"/>
<circle cx="506.4" cy="226" r="0.55" fill="#e08a28"/>
<circle cx="506.4" cy="230" r="0.55" fill="#e08a28"/>
<path d="M561.5,224.3 L569.3,224.3 L569.3,251.8 L561.5,251.8" stroke="#f2a548" stroke-width="0.7" fill="none" />
<rect x="560.0" y="234.5" width="3" height="2" fill="#fff" stroke="#f2a548" stroke-width="0.6"/>
<circle cx="569.3" cy="231" r="0.55" fill="#e08a28"/>
<circle cx="569.3" cy="236" r="0.55" fill="#e08a28"/>
<circle cx="569.3" cy="241" r="0.55" fill="#e08a28"/>
<circle cx="569.3" cy="245" r="0.55" fill="#e08a28"/>
<path d="M519.1,236.0 L521.7,235.0 L524.5,236.0 L527.1,235.0" stroke="#444" stroke-width="1" fill="none"/>
<path d="M544.1,252.3 L546.7,251.3 L549.5,252.3 L552.1,251.3" stroke="#444" stroke-width="1" fill="none"/>
<path d="M530.1,197.5 L531.0,199.5 L529.4,201.8 L530.7,204 L530.1,206" stroke="#444" stroke-width="0.8" fill="none"/>
<path d="M530.5,223.5 L532.3000000000001,226.5 L532.7,229.5 L531.3000000000001,232.5" stroke="#555" stroke-width="0.8" fill="none"/>
<path d="M530.4,238 L531.7,241 L532.3000000000001,245 L530.9,249" stroke="#888" stroke-width="0.6" fill="none"/>
<circle cx="530.1" cy="185" r="0.8" fill="#777"/>
<circle cx="530.1" cy="220.2" r="0.8" fill="#777"/>
<circle cx="530.1" cy="235.5" r="0.8" fill="#666"/>
<circle cx="530.1" cy="251.8" r="0.8" fill="#666"/>
<circle cx="530.1" cy="293.6" r="0.8" fill="#777"/>
<rect x="529.2" y="297" width="1.8" height="5.6" rx="0.8" fill="#fff" stroke="#999" stroke-width="0.5"/>
<circle cx="530.1" cy="306.2" r="0.6" fill="#888"/>
<path d="M528.1,309.6 L532.1,309.6" stroke="#888" stroke-width="0.65" fill="none" />
<path d="M529.1,310.8 L531.1,310.8" stroke="#aaa" stroke-width="0.5" fill="none" />
<path d="M620.2,185 L620.2,309.6" stroke="#8e8e8e" stroke-width="0.45" fill="none" />
<path d="M604.8,235.5 L620.2,235.5" stroke="#9a9a9a" stroke-width="0.45" fill="none" />
<path d="M620.2,251.8 L651.6,251.8" stroke="#9a9a9a" stroke-width="0.45" fill="none" />
<path d="M620.2,220.2 L636.0,220.2" stroke="#9a9a9a" stroke-width="0.45" fill="none" />
<path d="M620.2,150.3 L620.2,165.2" stroke="#f2a548" stroke-width="0.9" fill="none" />
<circle cx="620.2" cy="150.3" r="0.95" fill="#e8902a"/>
<circle cx="620.2" cy="157.4" r="0.95" fill="#e8902a"/>
<circle cx="620.2" cy="161.4" r="0.95" fill="#e8902a"/>
<circle cx="620.2" cy="165.2" r="0.95" fill="#e8902a"/>
<path d="M604.8,235.5 L604.8,161.4 L620.2,161.4" stroke="#f2a548" stroke-width="0.7" fill="none" />
<path d="M620.2,157.5 L651.6,157.5 L651.6,251.8" stroke="#f2a548" stroke-width="0.7" fill="none" />
<path d="M620.2,165.2 L636.0,165.2 L636.0,220.2" stroke="#f2a548" stroke-width="0.7" fill="none" />
<path d="M636.0,193.1 L643.6,193.1 L643.6,220.2 L636.0,220.2" stroke="#f2a548" stroke-width="0.7" fill="none" />
<rect x="634.5" y="207.2" width="3" height="2" fill="#fff" stroke="#f2a548" stroke-width="0.6"/>
<circle cx="643.6" cy="199" r="0.55" fill="#e08a28"/>
<circle cx="643.6" cy="203" r="0.55" fill="#e08a28"/>
<circle cx="643.6" cy="207" r="0.55" fill="#e08a28"/>
<circle cx="643.6" cy="211" r="0.55" fill="#e08a28"/>
<path d="M604.8,208.2 L596.5,208.2 L596.5,235.5 L604.8,235.5" stroke="#f2a548" stroke-width="0.7" fill="none" />
<rect x="603.3" y="220.6" width="3" height="2" fill="#fff" stroke="#f2a548" stroke-width="0.6"/>
<circle cx="596.5" cy="216" r="0.55" fill="#e08a28"/>
<circle cx="596.5" cy="221" r="0.55" fill="#e08a28"/>
<circle cx="596.5" cy="226" r="0.55" fill="#e08a28"/>
<circle cx="596.5" cy="230" r="0.55" fill="#e08a28"/>
<path d="M651.6,224.3 L659.4,224.3 L659.4,251.8 L651.6,251.8" stroke="#f2a548" stroke-width="0.7" fill="none" />
<rect x="650.1" y="234.5" width="3" height="2" fill="#fff" stroke="#f2a548" stroke-width="0.6"/>
<circle cx="659.4" cy="231" r="0.55" fill="#e08a28"/>
<circle cx="659.4" cy="236" r="0.55" fill="#e08a28"/>
<circle cx="659.4" cy="241" r="0.55" fill="#e08a28"/>
<circle cx="659.4" cy="245" r="0.55" fill="#e08a28"/>
<path d="M609.2,236.0 L611.8000000000001,235.0 L614.6,236.0 L617.2,235.0" stroke="#444" stroke-width="1" fill="none"/>
<path d="M634.2,252.3 L636.8000000000001,251.3 L639.6,252.3 L642.2,251.3" stroke="#444" stroke-width="1" fill="none"/>
<path d="M624.2,220.7 L626.8000000000001,219.7 L629.6,220.7 L632.2,219.7" stroke="#444" stroke-width="1" fill="none"/>
<circle cx="620.2" cy="185" r="0.8" fill="#777"/>
<circle cx="620.2" cy="220.2" r="0.8" fill="#777"/>
<circle cx="620.2" cy="235.5" r="0.8" fill="#666"/>
<circle cx="620.2" cy="251.8" r="0.8" fill="#666"/>
<circle cx="620.2" cy="293.6" r="0.8" fill="#777"/>
<rect x="619.3000000000001" y="297" width="1.8" height="5.6" rx="0.8" fill="#fff" stroke="#999" stroke-width="0.5"/>
<circle cx="620.2" cy="306.2" r="0.6" fill="#888"/>
<path d="M618.2,309.6 L622.2,309.6" stroke="#888" stroke-width="0.65" fill="none" />
<path d="M619.2,310.8 L621.2,310.8" stroke="#aaa" stroke-width="0.5" fill="none" />
<path d="M710.0,185 L710.0,309.6" stroke="#8e8e8e" stroke-width="0.45" fill="none" />
<path d="M694.6,235.5 L710.0,235.5" stroke="#9a9a9a" stroke-width="0.45" fill="none" />
<path d="M710.0,251.8 L741.4,251.8" stroke="#9a9a9a" stroke-width="0.45" fill="none" />
<path d="M710.0,220.2 L725.8,220.2" stroke="#9a9a9a" stroke-width="0.45" fill="none" />
<path d="M710.0,150.3 L710.0,165.2" stroke="#f2a548" stroke-width="0.9" fill="none" />
<circle cx="710.0" cy="150.3" r="0.95" fill="#e8902a"/>
<circle cx="710.0" cy="157.4" r="0.95" fill="#e8902a"/>
<circle cx="710.0" cy="161.4" r="0.95" fill="#e8902a"/>
<circle cx="710.0" cy="165.2" r="0.95" fill="#e8902a"/>
<path d="M694.6,235.5 L694.6,161.4 L710.0,161.4" stroke="#f2a548" stroke-width="0.7" fill="none" />
<path d="M710.0,157.5 L741.4,157.5 L741.4,251.8" stroke="#f2a548" stroke-width="0.7" fill="none" />
<path d="M710.0,165.2 L725.8,165.2 L725.8,220.2" stroke="#f2a548" stroke-width="0.7" fill="none" />
<path d="M725.8,193.1 L733.4,193.1 L733.4,220.2 L725.8,220.2" stroke="#f2a548" stroke-width="0.7" fill="none" />
<rect x="724.3" y="207.2" width="3" height="2" fill="#fff" stroke="#f2a548" stroke-width="0.6"/>
<circle cx="733.4" cy="199" r="0.55" fill="#e08a28"/>
<circle cx="733.4" cy="203" r="0.55" fill="#e08a28"/>
<circle cx="733.4" cy="207" r="0.55" fill="#e08a28"/>
<circle cx="733.4" cy="211" r="0.55" fill="#e08a28"/>
<path d="M694.6,208.2 L686.3,208.2 L686.3,235.5 L694.6,235.5" stroke="#f2a548" stroke-width="0.7" fill="none" />
<rect x="693.1" y="220.6" width="3" height="2" fill="#fff" stroke="#f2a548" stroke-width="0.6"/>
<circle cx="686.3" cy="216" r="0.55" fill="#e08a28"/>
<circle cx="686.3" cy="221" r="0.55" fill="#e08a28"/>
<circle cx="686.3" cy="226" r="0.55" fill="#e08a28"/>
<circle cx="686.3" cy="230" r="0.55" fill="#e08a28"/>
<path d="M741.4,224.3 L749.2,224.3 L749.2,251.8 L741.4,251.8" stroke="#f2a548" stroke-width="0.7" fill="none" />
<rect x="739.9" y="234.5" width="3" height="2" fill="#fff" stroke="#f2a548" stroke-width="0.6"/>
<circle cx="749.2" cy="231" r="0.55" fill="#e08a28"/>
<circle cx="749.2" cy="236" r="0.55" fill="#e08a28"/>
<circle cx="749.2" cy="241" r="0.55" fill="#e08a28"/>
<circle cx="749.2" cy="245" r="0.55" fill="#e08a28"/>
<path d="M699.0,236.0 L701.6,235.0 L704.4,236.0 L707.0,235.0" stroke="#444" stroke-width="1" fill="none"/>
<path d="M724.0,252.3 L726.6,251.3 L729.4,252.3 L732.0,251.3" stroke="#444" stroke-width="1" fill="none"/>
<path d="M714.0,220.7 L716.6,219.7 L719.4,220.7 L722.0,219.7" stroke="#444" stroke-width="1" fill="none"/>
<circle cx="710.0" cy="185" r="0.8" fill="#777"/>
<circle cx="710.0" cy="220.2" r="0.8" fill="#777"/>
<circle cx="710.0" cy="235.5" r="0.8" fill="#666"/>
<circle cx="710.0" cy="251.8" r="0.8" fill="#666"/>
<circle cx="710.0" cy="293.6" r="0.8" fill="#777"/>
<rect x="709.1" y="297" width="1.8" height="5.6" rx="0.8" fill="#fff" stroke="#999" stroke-width="0.5"/>
<circle cx="710.0" cy="306.2" r="0.6" fill="#888"/>
<path d="M708.0,309.6 L712.0,309.6" stroke="#888" stroke-width="0.65" fill="none" />
<path d="M709.0,310.8 L711.0,310.8" stroke="#aaa" stroke-width="0.5" fill="none" />
<path d="M800.2,185 L800.2,309.6" stroke="#8e8e8e" stroke-width="0.45" fill="none" />
<path d="M784.8,235.5 L800.2,235.5" stroke="#9a9a9a" stroke-width="0.45" fill="none" />
<path d="M800.2,251.8 L831.6,251.8" stroke="#9a9a9a" stroke-width="0.45" fill="none" />
<path d="M800.2,220.2 L816.0,220.2" stroke="#9a9a9a" stroke-width="0.45" fill="none" />
<path d="M800.2,150.3 L800.2,165.2" stroke="#f2a548" stroke-width="0.9" fill="none" />
<circle cx="800.2" cy="150.3" r="0.95" fill="#e8902a"/>
<circle cx="800.2" cy="157.4" r="0.95" fill="#e8902a"/>
<circle cx="800.2" cy="161.4" r="0.95" fill="#e8902a"/>
<circle cx="800.2" cy="165.2" r="0.95" fill="#e8902a"/>
<path d="M784.8,235.5 L784.8,161.4 L800.2,161.4" stroke="#f2a548" stroke-width="0.7" fill="none" />
<path d="M800.2,157.5 L831.6,157.5 L831.6,251.8" stroke="#f2a548" stroke-width="0.7" fill="none" />
<path d="M800.2,165.2 L816.0,165.2 L816.0,220.2" stroke="#f2a548" stroke-width="0.7" fill="none" />
<path d="M816.0,193.1 L823.6,193.1 L823.6,220.2 L816.0,220.2" stroke="#f2a548" stroke-width="0.7" fill="none" />
<rect x="814.5" y="207.2" width="3" height="2" fill="#fff" stroke="#f2a548" stroke-width="0.6"/>
<circle cx="823.6" cy="199" r="0.55" fill="#e08a28"/>
<circle cx="823.6" cy="203" r="0.55" fill="#e08a28"/>
<circle cx="823.6" cy="207" r="0.55" fill="#e08a28"/>
<circle cx="823.6" cy="211" r="0.55" fill="#e08a28"/>
<path d="M784.8,208.2 L776.5,208.2 L776.5,235.5 L784.8,235.5" stroke="#f2a548" stroke-width="0.7" fill="none" />
<rect x="783.3" y="220.6" width="3" height="2" fill="#fff" stroke="#f2a548" stroke-width="0.6"/>
<circle cx="776.5" cy="216" r="0.55" fill="#e08a28"/>
<circle cx="776.5" cy="221" r="0.55" fill="#e08a28"/>
<circle cx="776.5" cy="226" r="0.55" fill="#e08a28"/>
<circle cx="776.5" cy="230" r="0.55" fill="#e08a28"/>
<path d="M831.6,224.3 L839.4,224.3 L839.4,251.8 L831.6,251.8" stroke="#f2a548" stroke-width="0.7" fill="none" />
<rect x="830.1" y="234.5" width="3" height="2" fill="#fff" stroke="#f2a548" stroke-width="0.6"/>
<circle cx="839.4" cy="231" r="0.55" fill="#e08a28"/>
<circle cx="839.4" cy="236" r="0.55" fill="#e08a28"/>
<circle cx="839.4" cy="241" r="0.55" fill="#e08a28"/>
<circle cx="839.4" cy="245" r="0.55" fill="#e08a28"/>
<path d="M789.2,236.0 L791.8000000000001,235.0 L794.6,236.0 L797.2,235.0" stroke="#444" stroke-width="1" fill="none"/>
<path d="M814.2,252.3 L816.8000000000001,251.3 L819.6,252.3 L822.2,251.3" stroke="#444" stroke-width="1" fill="none"/>
<path d="M804.2,220.7 L806.8000000000001,219.7 L809.6,220.7 L812.2,219.7" stroke="#444" stroke-width="1" fill="none"/>
<circle cx="800.2" cy="185" r="0.8" fill="#777"/>
<circle cx="800.2" cy="220.2" r="0.8" fill="#777"/>
<circle cx="800.2" cy="235.5" r="0.8" fill="#666"/>
<circle cx="800.2" cy="251.8" r="0.8" fill="#666"/>
<circle cx="800.2" cy="293.6" r="0.8" fill="#777"/>
<rect x="799.3000000000001" y="297" width="1.8" height="5.6" rx="0.8" fill="#fff" stroke="#999" stroke-width="0.5"/>
<circle cx="800.2" cy="306.2" r="0.6" fill="#888"/>
<path d="M798.2,309.6 L802.2,309.6" stroke="#888" stroke-width="0.65" fill="none" />
<path d="M799.2,310.8 L801.2,310.8" stroke="#aaa" stroke-width="0.5" fill="none" />
<rect x="576.5" y="145.2" width="8.6" height="122.2" fill="none" stroke="#58d060" stroke-width="0.8" stroke-dasharray="3.2 1.3"/>
<text x="585.5" y="270.6" font-size="2.4" fill="#6fd877" text-anchor="end">TIG-LAM 220kV</text>
</svg>
</div></body></html>
